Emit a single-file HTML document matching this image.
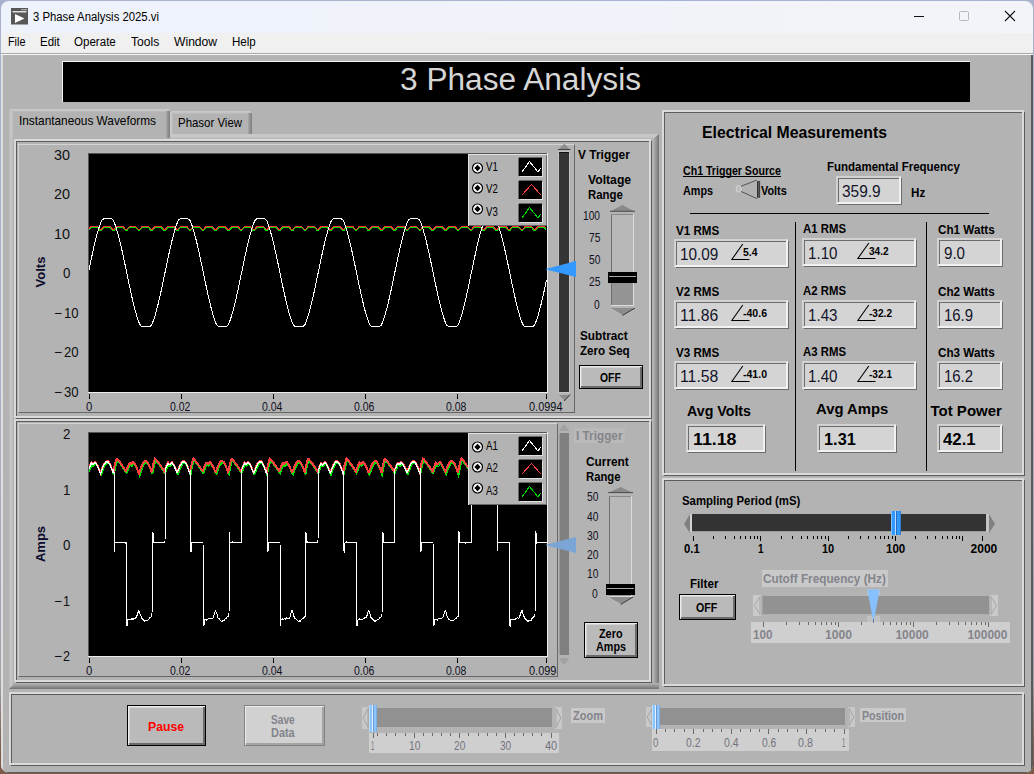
<!DOCTYPE html>
<html><head><meta charset="utf-8"><title>3 Phase Analysis 2025.vi</title>
<style>
html,body{margin:0;padding:0;}
body{width:1034px;height:774px;overflow:hidden;position:relative;background:linear-gradient(180deg,#a9b1d0 0,#aab0c8 50%,#a0a0a8 88%,#7a5c48 97%);font-family:"Liberation Sans",sans-serif;}
#root{position:absolute;left:0;top:0;width:1034px;height:774px;overflow:hidden;}
#root div,#root span.t,#root svg{position:absolute;box-sizing:content-box;}
span.t{white-space:nowrap;transform-origin:0 0;display:block;}
</style></head><body><div id="root">
<div id="win" style="left:1px;top:1px;width:1032px;height:772px;border-radius:8px;overflow:hidden;background:#b3b3b3">
<div style="left:-1px;top:-1px;width:1034px;height:774px">
<div style="left:1px;top:1px;width:1032px;height:32px;background:linear-gradient(90deg,#eef2fb,#f3f4f9);"></div>
<div style="left:1px;top:33px;width:1032px;height:20px;background:#f0f0f0;"></div>
<div style="left:1px;top:53px;width:1032px;height:1px;background:#a9a9a9;"></div>
<div style="left:1px;top:54px;width:1032px;height:1px;background:#fafafa;"></div>
<div style="left:1px;top:55px;width:2px;height:718px;background:#dedede;"></div>
<div style="left:1031px;top:55px;width:2px;height:718px;background:#5a5a5a;"></div>
<div style="left:1px;top:772px;width:1032px;height:1px;background:#5a5a5a;"></div>
<svg style="left:11px;top:8px" width="17" height="17" viewBox="0 0 17 17"><rect x="0" y="0" width="17" height="16.5" fill="#575757"/><rect x="1.5" y="3.2" width="14" height="1.2" fill="#fff"/><rect x="10.5" y="1.2" width="1.2" height="1" fill="#fff"/><rect x="12.5" y="1.2" width="1.2" height="1" fill="#fff"/><rect x="14.5" y="1.2" width="1.2" height="1" fill="#fff"/><path d="M4 6 L13.5 10.5 L4 15 Z" fill="#fff"/></svg>
<span class="t " style="left:33.40px;top:10.92px;font-size:12px;line-height:12px;color:#000;transform:scaleX(0.9444);">3 Phase Analysis 2025.vi</span>
<svg style="left:900px;top:1px" width="132" height="32" viewBox="0 0 132 32"><path d="M14 15.5 H24" stroke="#111" stroke-width="1" fill="none"/><rect x="59.5" y="10.5" width="9" height="9" rx="1" fill="none" stroke="#b9b9bd" stroke-width="1"/><path d="M105 10 L115 20 M115 10 L105 20" stroke="#111" stroke-width="1.1" fill="none"/></svg>
<span class="t " style="left:8.00px;top:36.22px;font-size:12px;line-height:12px;color:#000;transform:scaleX(0.8999);">File</span>
<span class="t " style="left:40.20px;top:36.22px;font-size:12px;line-height:12px;color:#000;transform:scaleX(0.9576);">Edit</span>
<span class="t " style="left:74.40px;top:36.22px;font-size:12px;line-height:12px;color:#000;transform:scaleX(0.9641);">Operate</span>
<span class="t " style="left:130.50px;top:36.22px;font-size:12px;line-height:12px;color:#000;transform:scaleX(1.0067);">Tools</span>
<span class="t " style="left:173.60px;top:36.22px;font-size:12px;line-height:12px;color:#000;transform:scaleX(1.0099);">Window</span>
<span class="t " style="left:231.60px;top:36.22px;font-size:12px;line-height:12px;color:#000;transform:scaleX(0.9644);">Help</span>
<div style="left:62px;top:61px;width:908px;height:41px;background:#f4f4f4;"></div>
<div style="left:63px;top:62px;width:907px;height:40px;background:#000;"></div>
<span class="t " style="left:399.50px;top:64.36px;font-size:31px;line-height:31px;color:#d6d6d6;transform:scaleX(1.0208);">3 Phase Analysis</span>
<div style="left:9px;top:134px;width:650px;height:555px;background:#b3b3b3"></div>
<div style="left:9px;top:134px;width:4px;height:555px;background:linear-gradient(90deg,#b9b9b9,#c8c8c8 50%,#bcbcbc);"></div>
<div style="left:170px;top:134px;width:489px;height:5px;background:linear-gradient(180deg,#c4c4c4,#cacaca 40%,#b8b8b8);"></div>
<div style="left:653px;top:134px;width:6px;height:555px;background:linear-gradient(90deg,#b6b6b6,#747474);clip-path:polygon(0 5px,100% 0,100% 100%,0 100%);"></div>
<div style="left:9px;top:683px;width:650px;height:6px;background:linear-gradient(180deg,#b6b6b6,#747474);clip-path:polygon(6px 0,100% 0,100% 100%,0 100%);"></div>
<div style="left:170px;top:111px;width:82px;height:23px;background:#b3b3b3;"></div>
<div style="left:170px;top:111px;width:82px;height:3px;background:linear-gradient(180deg,#cfcfcf,#b8b8b8);border-radius:3px 3px 0 0;"></div>
<div style="left:170px;top:112px;width:3px;height:22px;background:linear-gradient(90deg,#cfcfcf,#b8b8b8);"></div>
<div style="left:248px;top:113px;width:4px;height:21px;background:linear-gradient(90deg,#a8a8a8,#7c7c7c);"></div>
<span class="t " style="left:178.20px;top:115.58px;font-size:13px;line-height:13px;color:#000;transform:scaleX(0.8798);">Phasor View</span>
<div style="left:9px;top:109px;width:161px;height:30px;background:#b3b3b3;"></div>
<div style="left:9px;top:109px;width:161px;height:3px;background:linear-gradient(180deg,#cfcfcf,#b8b8b8);border-radius:3px 3px 0 0;"></div>
<div style="left:9px;top:110px;width:4px;height:30px;background:linear-gradient(90deg,#b9b9b9,#c8c8c8 50%,#bcbcbc);"></div>
<div style="left:166px;top:111px;width:4px;height:27px;background:linear-gradient(90deg,#a8a8a8,#7c7c7c);"></div>
<span class="t " style="left:19.40px;top:113.88px;font-size:13px;line-height:13px;color:#000;transform:scaleX(0.9101);">Instantaneous Waveforms</span>
<div style="left:16px;top:141px;width:634px;height:276px;border:1px solid #5c5c5c"></div>
<div style="left:14px;top:139px;width:633px;height:275px;border:2px solid #dadada"></div>
<div style="left:16px;top:421px;width:634px;height:260px;border:1px solid #5c5c5c"></div>
<div style="left:14px;top:419px;width:633px;height:259px;border:2px solid #dadada"></div>
<div style="left:664px;top:112px;width:359px;height:362px;border:1px solid #5c5c5c"></div>
<div style="left:662px;top:110px;width:358px;height:361px;border:2px solid #dadada"></div>
<div style="left:664px;top:480px;width:359px;height:205px;border:1px solid #5c5c5c"></div>
<div style="left:662px;top:478px;width:358px;height:204px;border:2px solid #dadada"></div>
<div style="left:11px;top:694px;width:1012px;height:70px;border:1px solid #5c5c5c"></div>
<div style="left:9px;top:692px;width:1011px;height:69px;border:2px solid #dadada"></div>
<div style="left:18px;top:144px;width:555px;height:267px;border:1px solid #d4d4d4;border-right-color:#666;border-bottom-color:#666"></div>
<div style="left:88px;top:153px;width:460px;height:240px;background:#ececec;"></div>
<div style="left:88px;top:153px;width:1px;height:239px;background:#555;"></div>
<div style="left:88px;top:153px;width:459px;height:1px;background:#555;"></div>
<div style="left:89px;top:154px;width:458px;height:238px;background:#000;"></div>
<span class="t " style="left:53.90px;top:147.74px;font-size:14px;line-height:14px;color:#111;transform:scaleX(1.0276);">30</span>
<span class="t " style="left:53.90px;top:187.24px;font-size:14px;line-height:14px;color:#111;transform:scaleX(1.0276);">20</span>
<span class="t " style="left:53.90px;top:226.74px;font-size:14px;line-height:14px;color:#111;transform:scaleX(1.0276);">10</span>
<span class="t " style="left:62.50px;top:266.24px;font-size:14px;line-height:14px;color:#111;transform:scaleX(0.9505);">0</span>
<span class="t " style="left:54.00px;top:305.74px;font-size:14px;line-height:14px;color:#111;transform:scaleX(0.9784);">−</span>
<span class="t " style="left:63.60px;top:305.74px;font-size:14px;line-height:14px;color:#111;transform:scaleX(0.9377);">10</span>
<span class="t " style="left:54.00px;top:345.24px;font-size:14px;line-height:14px;color:#111;transform:scaleX(0.9784);">−</span>
<span class="t " style="left:63.60px;top:345.24px;font-size:14px;line-height:14px;color:#111;transform:scaleX(0.9377);">20</span>
<span class="t " style="left:54.00px;top:384.74px;font-size:14px;line-height:14px;color:#111;transform:scaleX(0.9784);">−</span>
<span class="t " style="left:63.60px;top:384.74px;font-size:14px;line-height:14px;color:#111;transform:scaleX(0.9377);">30</span>
<div style="left:89px;top:394px;width:1px;height:5px;background:#000;"></div>
<span class="t " style="left:86.15px;top:400.52px;font-size:12px;line-height:12px;color:#101020;transform:scaleX(0.9441);">0</span>
<div style="left:181px;top:394px;width:1px;height:5px;background:#000;"></div>
<span class="t " style="left:170.40px;top:400.52px;font-size:12px;line-height:12px;color:#101020;transform:scaleX(0.8735);">0.02</span>
<div style="left:273px;top:394px;width:1px;height:5px;background:#000;"></div>
<span class="t " style="left:262.40px;top:400.52px;font-size:12px;line-height:12px;color:#101020;transform:scaleX(0.8735);">0.04</span>
<div style="left:365px;top:394px;width:1px;height:5px;background:#000;"></div>
<span class="t " style="left:354.40px;top:400.52px;font-size:12px;line-height:12px;color:#101020;transform:scaleX(0.8735);">0.06</span>
<div style="left:457px;top:394px;width:1px;height:5px;background:#000;"></div>
<span class="t " style="left:446.40px;top:400.52px;font-size:12px;line-height:12px;color:#101020;transform:scaleX(0.8735);">0.08</span>
<div style="left:546px;top:394px;width:1px;height:5px;background:#000;"></div>
<span class="t " style="left:529.00px;top:400.52px;font-size:12px;line-height:12px;color:#101020;transform:scaleX(0.9128);">0.0994</span>
<span class="t" style="left:39.6px;top:272px;font-size:13px;line-height:13px;font-weight:bold;color:#0a0a2a;transform:translate(-50%,-50%) rotate(-90deg);transform-origin:50% 50%;">Volts</span>
<svg style="left:89px;top:153px" width="458" height="239" viewBox="0 0 458 239"><polyline points="0.0,77.1 1.0,75.9 2.0,74.8 3.0,74.4 4.0,74.4 5.0,74.4 6.0,74.4 7.0,74.4 8.0,74.4 9.0,75.2 10.0,76.3 11.0,77.5 12.0,78.0 13.0,76.8 14.0,75.7 15.0,74.5 16.0,74.4 17.0,74.4 18.0,74.4 19.0,74.4 20.0,74.4 21.0,74.4 22.0,75.5 23.0,76.6 24.0,77.8 25.0,77.7 26.0,76.5 27.0,75.4 28.0,74.4 29.0,74.4 30.0,74.4 31.0,74.4 32.0,74.4 33.0,74.4 34.0,74.6 35.0,75.7 36.0,76.9 37.0,78.0 38.0,77.4 39.0,76.3 40.0,75.1 41.0,74.4 42.0,74.4 43.0,74.4 44.0,74.4 45.0,74.4 46.0,74.4 47.0,74.9 48.0,76.0 49.0,77.2 50.0,78.3 51.0,77.2 52.0,76.0 53.0,74.9 54.0,74.4 55.0,74.4 56.0,74.4 57.0,74.4 58.0,74.4 59.0,74.4 60.0,75.1 61.0,76.3 62.0,77.4 63.0,78.0 64.0,76.9 65.0,75.7 66.0,74.6 67.0,74.4 68.0,74.4 69.0,74.4 70.0,74.4 71.0,74.4 72.0,74.4 73.0,75.4 74.0,76.5 75.0,77.7 76.0,77.8 77.0,76.6 78.0,75.5 79.0,74.4 80.0,74.4 81.0,74.4 82.0,74.4 83.0,74.4 84.0,74.4 85.0,74.5 86.0,75.7 87.0,76.8 88.0,78.0 89.0,77.5 90.0,76.3 91.0,75.2 92.0,74.4 93.0,74.4 94.0,74.4 95.0,74.4 96.0,74.4 97.0,74.4 98.0,74.8 99.0,75.9 100.0,77.1 101.0,78.2 102.0,77.2 103.0,76.1 104.0,74.9 105.0,74.4 106.0,74.4 107.0,74.4 108.0,74.4 109.0,74.4 110.0,74.4 111.0,75.0 112.0,76.2 113.0,77.3 114.0,78.1 115.0,77.0 116.0,75.8 117.0,74.7 118.0,74.4 119.0,74.4 120.0,74.4 121.0,74.4 122.0,74.4 123.0,74.4 124.0,75.3 125.0,76.5 126.0,77.6 127.0,77.8 128.0,76.7 129.0,75.5 130.0,74.4 131.0,74.4 132.0,74.4 133.0,74.4 134.0,74.4 135.0,74.4 136.0,74.4 137.0,75.6 138.0,76.7 139.0,77.9 140.0,77.6 141.0,76.4 142.0,75.3 143.0,74.4 144.0,74.4 145.0,74.4 146.0,74.4 147.0,74.4 148.0,74.4 149.0,74.7 150.0,75.8 151.0,77.0 152.0,78.1 153.0,77.3 154.0,76.2 155.0,75.0 156.0,74.4 157.0,74.4 158.0,74.4 159.0,74.4 160.0,74.4 161.0,74.4 162.0,75.0 163.0,76.1 164.0,77.3 165.0,78.2 166.0,77.0 167.0,75.9 168.0,74.7 169.0,74.4 170.0,74.4 171.0,74.4 172.0,74.4 173.0,74.4 174.0,74.4 175.0,75.2 176.0,76.4 177.0,77.5 178.0,77.9 179.0,76.8 180.0,75.6 181.0,74.5 182.0,74.4 183.0,74.4 184.0,74.4 185.0,74.4 186.0,74.4 187.0,74.4 188.0,75.5 189.0,76.7 190.0,77.8 191.0,77.6 192.0,76.5 193.0,75.3 194.0,74.4 195.0,74.4 196.0,74.4 197.0,74.4 198.0,74.4 199.0,74.4 200.0,74.6 201.0,75.8 202.0,76.9 203.0,78.1 204.0,77.4 205.0,76.2 206.0,75.1 207.0,74.4 208.0,74.4 209.0,74.4 210.0,74.4 211.0,74.4 212.0,74.4 213.0,74.9 214.0,76.0 215.0,77.2 216.0,78.3 217.0,77.1 218.0,76.0 219.0,74.8 220.0,74.4 221.0,74.4 222.0,74.4 223.0,74.4 224.0,74.4 225.0,74.4 226.0,75.2 227.0,76.3 228.0,77.5 229.0,78.0 230.0,76.8 231.0,75.7 232.0,74.5 233.0,74.4 234.0,74.4 235.0,74.4 236.0,74.4 237.0,74.4 238.0,74.4 239.0,75.4 240.0,76.6 241.0,77.7 242.0,77.7 243.0,76.6 244.0,75.4 245.0,74.4 246.0,74.4 247.0,74.4 248.0,74.4 249.0,74.4 250.0,74.4 251.0,74.5 252.0,75.7 253.0,76.8 254.0,78.0 255.0,77.5 256.0,76.3 257.0,75.2 258.0,74.4 259.0,74.4 260.0,74.4 261.0,74.4 262.0,74.4 263.0,74.4 264.0,74.8 265.0,76.0 266.0,77.1 267.0,78.3 268.0,77.2 269.0,76.0 270.0,74.9 271.0,74.4 272.0,74.4 273.0,74.4 274.0,74.4 275.0,74.4 276.0,74.4 277.0,75.1 278.0,76.2 279.0,77.4 280.0,78.1 281.0,76.9 282.0,75.8 283.0,74.6 284.0,74.4 285.0,74.4 286.0,74.4 287.0,74.4 288.0,74.4 289.0,74.4 290.0,75.3 291.0,76.5 292.0,77.6 293.0,77.8 294.0,76.7 295.0,75.5 296.0,74.4 297.0,74.4 298.0,74.4 299.0,74.4 300.0,74.4 301.0,74.4 302.0,74.5 303.0,75.6 304.0,76.8 305.0,77.9 306.0,77.5 307.0,76.4 308.0,75.2 309.0,74.4 310.0,74.4 311.0,74.4 312.0,74.4 313.0,74.4 314.0,74.4 315.0,74.7 316.0,75.9 317.0,77.0 318.0,78.2 319.0,77.3 320.0,76.1 321.0,75.0 322.0,74.4 323.0,74.4 324.0,74.4 325.0,74.4 326.0,74.4 327.0,74.4 328.0,75.0 329.0,76.2 330.0,77.3 331.0,78.1 332.0,77.0 333.0,75.8 334.0,74.7 335.0,74.4 336.0,74.4 337.0,74.4 338.0,74.4 339.0,74.4 340.0,74.4 341.0,75.3 342.0,76.4 343.0,77.6 344.0,77.9 345.0,76.7 346.0,75.6 347.0,74.4 348.0,74.4 349.0,74.4 350.0,74.4 351.0,74.4 352.0,74.4 353.0,74.4 354.0,75.5 355.0,76.7 356.0,77.8 357.0,77.6 358.0,76.5 359.0,75.3 360.0,74.4 361.0,74.4 362.0,74.4 363.0,74.4 364.0,74.4 365.0,74.4 366.0,74.7 367.0,75.8 368.0,77.0 369.0,78.1 370.0,77.3 371.0,76.2 372.0,75.0 373.0,74.4 374.0,74.4 375.0,74.4 376.0,74.4 377.0,74.4 378.0,74.4 379.0,74.9 380.0,76.1 381.0,77.2 382.0,78.2 383.0,77.1 384.0,75.9 385.0,74.8 386.0,74.4 387.0,74.4 388.0,74.4 389.0,74.4 390.0,74.4 391.0,74.4 392.0,75.2 393.0,76.3 394.0,77.5 395.0,78.0 396.0,76.8 397.0,75.7 398.0,74.5 399.0,74.4 400.0,74.4 401.0,74.4 402.0,74.4 403.0,74.4 404.0,74.4 405.0,75.5 406.0,76.6 407.0,77.8 408.0,77.7 409.0,76.5 410.0,75.4 411.0,74.4 412.0,74.4 413.0,74.4 414.0,74.4 415.0,74.4 416.0,74.4 417.0,74.6 418.0,75.7 419.0,76.9 420.0,78.0 421.0,77.4 422.0,76.3 423.0,75.1 424.0,74.4 425.0,74.4 426.0,74.4 427.0,74.4 428.0,74.4 429.0,74.4 430.0,74.9 431.0,76.0 432.0,77.2 433.0,78.3 434.0,77.1 435.0,76.0 436.0,74.8 437.0,74.4 438.0,74.4 439.0,74.4 440.0,74.4 441.0,74.4 442.0,74.4 443.0,75.1 444.0,76.3 445.0,77.4 446.0,78.0 447.0,76.9 448.0,75.7 449.0,74.6 450.0,74.4 451.0,74.4 452.0,74.4 453.0,74.4 454.0,74.4 455.0,74.4 456.0,75.4 457.0,76.5" fill="none" stroke="#00e000" stroke-width="1" shape-rendering="crispEdges"/><polyline points="0.0,75.9 1.0,74.7 2.0,73.6 3.0,73.2 4.0,73.2 5.0,73.2 6.0,73.2 7.0,73.2 8.0,73.2 9.0,74.0 10.0,75.1 11.0,76.3 12.0,76.8 13.0,75.6 14.0,74.5 15.0,73.3 16.0,73.2 17.0,73.2 18.0,73.2 19.0,73.2 20.0,73.2 21.0,73.2 22.0,74.3 23.0,75.4 24.0,76.6 25.0,76.5 26.0,75.3 27.0,74.2 28.0,73.2 29.0,73.2 30.0,73.2 31.0,73.2 32.0,73.2 33.0,73.2 34.0,73.4 35.0,74.5 36.0,75.7 37.0,76.8 38.0,76.2 39.0,75.1 40.0,73.9 41.0,73.2 42.0,73.2 43.0,73.2 44.0,73.2 45.0,73.2 46.0,73.2 47.0,73.7 48.0,74.8 49.0,76.0 50.0,77.1 51.0,76.0 52.0,74.8 53.0,73.7 54.0,73.2 55.0,73.2 56.0,73.2 57.0,73.2 58.0,73.2 59.0,73.2 60.0,73.9 61.0,75.1 62.0,76.2 63.0,76.8 64.0,75.7 65.0,74.5 66.0,73.4 67.0,73.2 68.0,73.2 69.0,73.2 70.0,73.2 71.0,73.2 72.0,73.2 73.0,74.2 74.0,75.3 75.0,76.5 76.0,76.6 77.0,75.4 78.0,74.3 79.0,73.2 80.0,73.2 81.0,73.2 82.0,73.2 83.0,73.2 84.0,73.2 85.0,73.3 86.0,74.5 87.0,75.6 88.0,76.8 89.0,76.3 90.0,75.1 91.0,74.0 92.0,73.2 93.0,73.2 94.0,73.2 95.0,73.2 96.0,73.2 97.0,73.2 98.0,73.6 99.0,74.7 100.0,75.9 101.0,77.0 102.0,76.0 103.0,74.9 104.0,73.7 105.0,73.2 106.0,73.2 107.0,73.2 108.0,73.2 109.0,73.2 110.0,73.2 111.0,73.8 112.0,75.0 113.0,76.1 114.0,76.9 115.0,75.8 116.0,74.6 117.0,73.5 118.0,73.2 119.0,73.2 120.0,73.2 121.0,73.2 122.0,73.2 123.0,73.2 124.0,74.1 125.0,75.3 126.0,76.4 127.0,76.6 128.0,75.5 129.0,74.3 130.0,73.2 131.0,73.2 132.0,73.2 133.0,73.2 134.0,73.2 135.0,73.2 136.0,73.2 137.0,74.4 138.0,75.5 139.0,76.7 140.0,76.4 141.0,75.2 142.0,74.1 143.0,73.2 144.0,73.2 145.0,73.2 146.0,73.2 147.0,73.2 148.0,73.2 149.0,73.5 150.0,74.6 151.0,75.8 152.0,76.9 153.0,76.1 154.0,75.0 155.0,73.8 156.0,73.2 157.0,73.2 158.0,73.2 159.0,73.2 160.0,73.2 161.0,73.2 162.0,73.8 163.0,74.9 164.0,76.1 165.0,77.0 166.0,75.8 167.0,74.7 168.0,73.5 169.0,73.2 170.0,73.2 171.0,73.2 172.0,73.2 173.0,73.2 174.0,73.2 175.0,74.0 176.0,75.2 177.0,76.3 178.0,76.7 179.0,75.6 180.0,74.4 181.0,73.3 182.0,73.2 183.0,73.2 184.0,73.2 185.0,73.2 186.0,73.2 187.0,73.2 188.0,74.3 189.0,75.5 190.0,76.6 191.0,76.4 192.0,75.3 193.0,74.1 194.0,73.2 195.0,73.2 196.0,73.2 197.0,73.2 198.0,73.2 199.0,73.2 200.0,73.4 201.0,74.6 202.0,75.7 203.0,76.9 204.0,76.2 205.0,75.0 206.0,73.9 207.0,73.2 208.0,73.2 209.0,73.2 210.0,73.2 211.0,73.2 212.0,73.2 213.0,73.7 214.0,74.8 215.0,76.0 216.0,77.1 217.0,75.9 218.0,74.8 219.0,73.6 220.0,73.2 221.0,73.2 222.0,73.2 223.0,73.2 224.0,73.2 225.0,73.2 226.0,74.0 227.0,75.1 228.0,76.3 229.0,76.8 230.0,75.6 231.0,74.5 232.0,73.3 233.0,73.2 234.0,73.2 235.0,73.2 236.0,73.2 237.0,73.2 238.0,73.2 239.0,74.2 240.0,75.4 241.0,76.5 242.0,76.5 243.0,75.4 244.0,74.2 245.0,73.2 246.0,73.2 247.0,73.2 248.0,73.2 249.0,73.2 250.0,73.2 251.0,73.3 252.0,74.5 253.0,75.6 254.0,76.8 255.0,76.3 256.0,75.1 257.0,74.0 258.0,73.2 259.0,73.2 260.0,73.2 261.0,73.2 262.0,73.2 263.0,73.2 264.0,73.6 265.0,74.8 266.0,75.9 267.0,77.1 268.0,76.0 269.0,74.8 270.0,73.7 271.0,73.2 272.0,73.2 273.0,73.2 274.0,73.2 275.0,73.2 276.0,73.2 277.0,73.9 278.0,75.0 279.0,76.2 280.0,76.9 281.0,75.7 282.0,74.6 283.0,73.4 284.0,73.2 285.0,73.2 286.0,73.2 287.0,73.2 288.0,73.2 289.0,73.2 290.0,74.1 291.0,75.3 292.0,76.4 293.0,76.6 294.0,75.5 295.0,74.3 296.0,73.2 297.0,73.2 298.0,73.2 299.0,73.2 300.0,73.2 301.0,73.2 302.0,73.3 303.0,74.4 304.0,75.6 305.0,76.7 306.0,76.3 307.0,75.2 308.0,74.0 309.0,73.2 310.0,73.2 311.0,73.2 312.0,73.2 313.0,73.2 314.0,73.2 315.0,73.5 316.0,74.7 317.0,75.8 318.0,77.0 319.0,76.1 320.0,74.9 321.0,73.8 322.0,73.2 323.0,73.2 324.0,73.2 325.0,73.2 326.0,73.2 327.0,73.2 328.0,73.8 329.0,75.0 330.0,76.1 331.0,76.9 332.0,75.8 333.0,74.6 334.0,73.5 335.0,73.2 336.0,73.2 337.0,73.2 338.0,73.2 339.0,73.2 340.0,73.2 341.0,74.1 342.0,75.2 343.0,76.4 344.0,76.7 345.0,75.5 346.0,74.4 347.0,73.2 348.0,73.2 349.0,73.2 350.0,73.2 351.0,73.2 352.0,73.2 353.0,73.2 354.0,74.3 355.0,75.5 356.0,76.6 357.0,76.4 358.0,75.3 359.0,74.1 360.0,73.2 361.0,73.2 362.0,73.2 363.0,73.2 364.0,73.2 365.0,73.2 366.0,73.5 367.0,74.6 368.0,75.8 369.0,76.9 370.0,76.1 371.0,75.0 372.0,73.8 373.0,73.2 374.0,73.2 375.0,73.2 376.0,73.2 377.0,73.2 378.0,73.2 379.0,73.7 380.0,74.9 381.0,76.0 382.0,77.0 383.0,75.9 384.0,74.7 385.0,73.6 386.0,73.2 387.0,73.2 388.0,73.2 389.0,73.2 390.0,73.2 391.0,73.2 392.0,74.0 393.0,75.1 394.0,76.3 395.0,76.8 396.0,75.6 397.0,74.5 398.0,73.3 399.0,73.2 400.0,73.2 401.0,73.2 402.0,73.2 403.0,73.2 404.0,73.2 405.0,74.3 406.0,75.4 407.0,76.6 408.0,76.5 409.0,75.3 410.0,74.2 411.0,73.2 412.0,73.2 413.0,73.2 414.0,73.2 415.0,73.2 416.0,73.2 417.0,73.4 418.0,74.5 419.0,75.7 420.0,76.8 421.0,76.2 422.0,75.1 423.0,73.9 424.0,73.2 425.0,73.2 426.0,73.2 427.0,73.2 428.0,73.2 429.0,73.2 430.0,73.7 431.0,74.8 432.0,76.0 433.0,77.1 434.0,75.9 435.0,74.8 436.0,73.6 437.0,73.2 438.0,73.2 439.0,73.2 440.0,73.2 441.0,73.2 442.0,73.2 443.0,73.9 444.0,75.1 445.0,76.2 446.0,76.8 447.0,75.7 448.0,74.5 449.0,73.4 450.0,73.2 451.0,73.2 452.0,73.2 453.0,73.2 454.0,73.2 455.0,73.2 456.0,74.2 457.0,75.3" fill="none" stroke="#ff3030" stroke-width="1" shape-rendering="crispEdges"/><polyline points="0.0,116.7 0.5,114.3 1.0,111.9 1.5,109.5 2.0,107.1 2.5,104.8 3.0,102.5 3.5,100.2 4.0,97.9 4.5,95.7 5.0,93.5 5.5,91.4 6.0,89.3 6.5,87.2 7.0,85.2 7.5,83.3 8.0,81.4 8.5,79.6 9.0,77.9 9.5,76.2 10.0,74.6 10.5,73.1 11.0,71.7 11.5,70.3 12.0,69.0 12.5,67.9 13.0,67.1 13.5,66.5 14.0,66.2 14.5,66.0 15.0,65.8 15.5,65.7 16.0,65.7 16.5,65.6 17.0,65.6 17.5,65.6 18.0,65.6 18.5,65.6 19.0,65.6 19.5,65.6 20.0,65.6 20.5,65.6 21.0,65.7 21.5,65.7 22.0,65.8 22.5,65.9 23.0,66.1 23.5,66.4 24.0,67.0 24.5,67.7 25.0,68.8 25.5,70.1 26.0,71.4 26.5,72.8 27.0,74.3 27.5,75.9 28.0,77.6 28.5,79.3 29.0,81.1 29.5,82.9 30.0,84.8 30.5,86.8 31.0,88.9 31.5,90.9 32.0,93.1 32.5,95.3 33.0,97.5 33.5,99.7 34.0,102.0 34.5,104.3 35.0,106.7 35.5,109.0 36.0,111.4 36.5,113.8 37.0,116.2 37.5,118.6 38.0,121.0 38.5,123.5 39.0,125.9 39.5,128.3 40.0,130.6 40.5,133.0 41.0,135.3 41.5,137.6 42.0,139.9 42.5,142.2 43.0,144.4 43.5,146.6 44.0,148.7 44.5,150.8 45.0,152.8 45.5,154.7 46.0,156.6 46.5,158.5 47.0,160.3 47.5,162.0 48.0,163.6 48.5,165.2 49.0,166.7 49.5,168.1 50.0,169.4 50.5,170.6 51.0,171.6 51.5,172.4 52.0,172.8 52.5,173.1 53.0,173.3 53.5,173.4 54.0,173.5 54.5,173.6 55.0,173.6 55.5,173.6 56.0,173.6 56.5,173.6 57.0,173.6 57.5,173.6 58.0,173.6 58.5,173.6 59.0,173.6 59.5,173.5 60.0,173.5 60.5,173.4 61.0,173.2 61.5,173.0 62.0,172.6 62.5,172.0 63.0,171.1 63.5,169.9 64.0,168.6 64.5,167.2 65.0,165.8 65.5,164.3 66.0,162.6 66.5,161.0 67.0,159.2 67.5,157.4 68.0,155.5 68.5,153.6 69.0,151.6 69.5,149.5 70.0,147.4 70.5,145.3 71.0,143.1 71.5,140.8 72.0,138.6 72.5,136.3 73.0,133.9 73.5,131.6 74.0,129.2 74.5,126.8 75.0,124.4 75.5,122.0 76.0,119.6 76.5,117.2 77.0,114.8 77.5,112.4 78.0,110.0 78.5,107.6 79.0,105.3 79.5,102.9 80.0,100.6 80.5,98.4 81.0,96.1 81.5,93.9 82.0,91.8 82.5,89.7 83.0,87.6 83.5,85.6 84.0,83.7 84.5,81.8 85.0,80.0 85.5,78.2 86.0,76.6 86.5,74.9 87.0,73.4 87.5,72.0 88.0,70.6 88.5,69.3 89.0,68.1 89.5,67.2 90.0,66.6 90.5,66.2 91.0,66.0 91.5,65.8 92.0,65.7 92.5,65.7 93.0,65.6 93.5,65.6 94.0,65.6 94.5,65.6 95.0,65.6 95.5,65.6 96.0,65.6 96.5,65.6 97.0,65.6 97.5,65.6 98.0,65.7 98.5,65.8 99.0,65.9 99.5,66.1 100.0,66.4 100.5,66.8 101.0,67.6 101.5,68.6 102.0,69.8 102.5,71.1 103.0,72.5 103.5,74.0 104.0,75.6 104.5,77.2 105.0,78.9 105.5,80.7 106.0,82.6 106.5,84.5 107.0,86.4 107.5,88.4 108.0,90.5 108.5,92.6 109.0,94.8 109.5,97.0 110.0,99.3 110.5,101.6 111.0,103.9 111.5,106.2 112.0,108.6 112.5,110.9 113.0,113.3 113.5,115.7 114.0,118.2 114.5,120.6 115.0,123.0 115.5,125.4 116.0,127.8 116.5,130.2 117.0,132.5 117.5,134.9 118.0,137.2 118.5,139.5 119.0,141.7 119.5,143.9 120.0,146.1 120.5,148.3 121.0,150.3 121.5,152.4 122.0,154.4 122.5,156.3 123.0,158.1 123.5,159.9 124.0,161.6 124.5,163.3 125.0,164.9 125.5,166.4 126.0,167.8 126.5,169.1 127.0,170.4 127.5,171.5 128.0,172.2 128.5,172.8 129.0,173.1 129.5,173.3 130.0,173.4 130.5,173.5 131.0,173.5 131.5,173.6 132.0,173.6 132.5,173.6 133.0,173.6 133.5,173.6 134.0,173.6 134.5,173.6 135.0,173.6 135.5,173.6 136.0,173.5 136.5,173.5 137.0,173.4 137.5,173.2 138.0,173.0 138.5,172.7 139.0,172.1 139.5,171.3 140.0,170.2 140.5,168.9 141.0,167.5 141.5,166.1 142.0,164.6 142.5,163.0 143.0,161.3 143.5,159.6 144.0,157.8 144.5,155.9 145.0,154.0 145.5,152.0 146.0,149.9 146.5,147.8 147.0,145.7 147.5,143.5 148.0,141.3 148.5,139.0 149.0,136.7 149.5,134.4 150.0,132.1 150.5,129.7 151.0,127.3 151.5,124.9 152.0,122.5 152.5,120.1 153.0,117.7 153.5,115.3 154.0,112.9 154.5,110.5 155.0,108.1 155.5,105.7 156.0,103.4 156.5,101.1 157.0,98.8 157.5,96.6 158.0,94.4 158.5,92.2 159.0,90.1 159.5,88.0 160.0,86.0 160.5,84.1 161.0,82.2 161.5,80.4 162.0,78.6 162.5,76.9 163.0,75.3 163.5,73.7 164.0,72.2 164.5,70.8 165.0,69.5 165.5,68.3 166.0,67.4 166.5,66.7 167.0,66.3 167.5,66.0 168.0,65.9 168.5,65.8 169.0,65.7 169.5,65.6 170.0,65.6 170.5,65.6 171.0,65.6 171.5,65.6 172.0,65.6 172.5,65.6 173.0,65.6 173.5,65.6 174.0,65.6 174.5,65.7 175.0,65.8 175.5,65.9 176.0,66.0 176.5,66.3 177.0,66.7 177.5,67.4 178.0,68.3 178.5,69.5 179.0,70.8 179.5,72.2 180.0,73.7 180.5,75.3 181.0,76.9 181.5,78.6 182.0,80.4 182.5,82.2 183.0,84.1 183.5,86.0 184.0,88.0 184.5,90.1 185.0,92.2 185.5,94.4 186.0,96.6 186.5,98.8 187.0,101.1 187.5,103.4 188.0,105.7 188.5,108.1 189.0,110.5 189.5,112.9 190.0,115.3 190.5,117.7 191.0,120.1 191.5,122.5 192.0,124.9 192.5,127.3 193.0,129.7 193.5,132.1 194.0,134.4 194.5,136.7 195.0,139.0 195.5,141.3 196.0,143.5 196.5,145.7 197.0,147.8 197.5,149.9 198.0,152.0 198.5,154.0 199.0,155.9 199.5,157.8 200.0,159.6 200.5,161.3 201.0,163.0 201.5,164.6 202.0,166.1 202.5,167.5 203.0,168.9 203.5,170.2 204.0,171.3 204.5,172.1 205.0,172.7 205.5,173.0 206.0,173.2 206.5,173.4 207.0,173.5 207.5,173.5 208.0,173.6 208.5,173.6 209.0,173.6 209.5,173.6 210.0,173.6 210.5,173.6 211.0,173.6 211.5,173.6 212.0,173.6 212.5,173.5 213.0,173.5 213.5,173.4 214.0,173.3 214.5,173.1 215.0,172.8 215.5,172.2 216.0,171.5 216.5,170.4 217.0,169.1 217.5,167.8 218.0,166.4 218.5,164.9 219.0,163.3 219.5,161.6 220.0,159.9 220.5,158.1 221.0,156.3 221.5,154.4 222.0,152.4 222.5,150.3 223.0,148.3 223.5,146.1 224.0,143.9 224.5,141.7 225.0,139.5 225.5,137.2 226.0,134.9 226.5,132.5 227.0,130.2 227.5,127.8 228.0,125.4 228.5,123.0 229.0,120.6 229.5,118.2 230.0,115.7 230.5,113.3 231.0,110.9 231.5,108.6 232.0,106.2 232.5,103.9 233.0,101.6 233.5,99.3 234.0,97.0 234.5,94.8 235.0,92.6 235.5,90.5 236.0,88.4 236.5,86.4 237.0,84.5 237.5,82.6 238.0,80.7 238.5,78.9 239.0,77.2 239.5,75.6 240.0,74.0 240.5,72.5 241.0,71.1 241.5,69.8 242.0,68.6 242.5,67.6 243.0,66.8 243.5,66.4 244.0,66.1 244.5,65.9 245.0,65.8 245.5,65.7 246.0,65.6 246.5,65.6 247.0,65.6 247.5,65.6 248.0,65.6 248.5,65.6 249.0,65.6 249.5,65.6 250.0,65.6 250.5,65.6 251.0,65.7 251.5,65.7 252.0,65.8 252.5,66.0 253.0,66.2 253.5,66.6 254.0,67.2 254.5,68.1 255.0,69.3 255.5,70.6 256.0,72.0 256.5,73.4 257.0,74.9 257.5,76.6 258.0,78.2 258.5,80.0 259.0,81.8 259.5,83.7 260.0,85.6 260.5,87.6 261.0,89.7 261.5,91.8 262.0,93.9 262.5,96.1 263.0,98.4 263.5,100.6 264.0,102.9 264.5,105.3 265.0,107.6 265.5,110.0 266.0,112.4 266.5,114.8 267.0,117.2 267.5,119.6 268.0,122.0 268.5,124.4 269.0,126.8 269.5,129.2 270.0,131.6 270.5,133.9 271.0,136.3 271.5,138.6 272.0,140.8 272.5,143.1 273.0,145.3 273.5,147.4 274.0,149.5 274.5,151.6 275.0,153.6 275.5,155.5 276.0,157.4 276.5,159.2 277.0,161.0 277.5,162.6 278.0,164.3 278.5,165.8 279.0,167.2 279.5,168.6 280.0,169.9 280.5,171.1 281.0,172.0 281.5,172.6 282.0,173.0 282.5,173.2 283.0,173.4 283.5,173.5 284.0,173.5 284.5,173.6 285.0,173.6 285.5,173.6 286.0,173.6 286.5,173.6 287.0,173.6 287.5,173.6 288.0,173.6 288.5,173.6 289.0,173.6 289.5,173.5 290.0,173.4 290.5,173.3 291.0,173.1 291.5,172.8 292.0,172.4 292.5,171.6 293.0,170.6 293.5,169.4 294.0,168.1 294.5,166.7 295.0,165.2 295.5,163.6 296.0,162.0 296.5,160.3 297.0,158.5 297.5,156.6 298.0,154.7 298.5,152.8 299.0,150.8 299.5,148.7 300.0,146.6 300.5,144.4 301.0,142.2 301.5,139.9 302.0,137.6 302.5,135.3 303.0,133.0 303.5,130.6 304.0,128.3 304.5,125.9 305.0,123.5 305.5,121.0 306.0,118.6 306.5,116.2 307.0,113.8 307.5,111.4 308.0,109.0 308.5,106.7 309.0,104.3 309.5,102.0 310.0,99.7 310.5,97.5 311.0,95.3 311.5,93.1 312.0,90.9 312.5,88.9 313.0,86.8 313.5,84.8 314.0,82.9 314.5,81.1 315.0,79.3 315.5,77.6 316.0,75.9 316.5,74.3 317.0,72.8 317.5,71.4 318.0,70.1 318.5,68.8 319.0,67.7 319.5,67.0 320.0,66.4 320.5,66.1 321.0,65.9 321.5,65.8 322.0,65.7 322.5,65.7 323.0,65.6 323.5,65.6 324.0,65.6 324.5,65.6 325.0,65.6 325.5,65.6 326.0,65.6 326.5,65.6 327.0,65.6 327.5,65.7 328.0,65.7 328.5,65.8 329.0,66.0 329.5,66.2 330.0,66.5 330.5,67.1 331.0,67.9 331.5,69.0 332.0,70.3 332.5,71.7 333.0,73.1 333.5,74.6 334.0,76.2 334.5,77.9 335.0,79.6 335.5,81.4 336.0,83.3 336.5,85.2 337.0,87.2 337.5,89.3 338.0,91.4 338.5,93.5 339.0,95.7 339.5,97.9 340.0,100.2 340.5,102.5 341.0,104.8 341.5,107.1 342.0,109.5 342.5,111.9 343.0,114.3 343.5,116.7 344.0,119.1 344.5,121.5 345.0,123.9 345.5,126.3 346.0,128.7 346.5,131.1 347.0,133.5 347.5,135.8 348.0,138.1 348.5,140.4 349.0,142.6 349.5,144.8 350.0,147.0 350.5,149.1 351.0,151.2 351.5,153.2 352.0,155.1 352.5,157.0 353.0,158.8 353.5,160.6 354.0,162.3 354.5,163.9 355.0,165.5 355.5,167.0 356.0,168.4 356.5,169.7 357.0,170.9 357.5,171.8 358.0,172.5 358.5,172.9 359.0,173.2 359.5,173.3 360.0,173.4 360.5,173.5 361.0,173.6 361.5,173.6 362.0,173.6 362.5,173.6 363.0,173.6 363.5,173.6 364.0,173.6 364.5,173.6 365.0,173.6 365.5,173.6 366.0,173.5 366.5,173.4 367.0,173.3 367.5,173.2 368.0,172.9 368.5,172.5 369.0,171.8 369.5,170.9 370.0,169.7 370.5,168.4 371.0,167.0 371.5,165.5 372.0,163.9 372.5,162.3 373.0,160.6 373.5,158.8 374.0,157.0 374.5,155.1 375.0,153.2 375.5,151.2 376.0,149.1 376.5,147.0 377.0,144.8 377.5,142.6 378.0,140.4 378.5,138.1 379.0,135.8 379.5,133.5 380.0,131.1 380.5,128.7 381.0,126.3 381.5,123.9 382.0,121.5 382.5,119.1 383.0,116.7 383.5,114.3 384.0,111.9 384.5,109.5 385.0,107.1 385.5,104.8 386.0,102.5 386.5,100.2 387.0,97.9 387.5,95.7 388.0,93.5 388.5,91.4 389.0,89.3 389.5,87.2 390.0,85.2 390.5,83.3 391.0,81.4 391.5,79.6 392.0,77.9 392.5,76.2 393.0,74.6 393.5,73.1 394.0,71.7 394.5,70.3 395.0,69.0 395.5,67.9 396.0,67.1 396.5,66.5 397.0,66.2 397.5,66.0 398.0,65.8 398.5,65.7 399.0,65.7 399.5,65.6 400.0,65.6 400.5,65.6 401.0,65.6 401.5,65.6 402.0,65.6 402.5,65.6 403.0,65.6 403.5,65.6 404.0,65.7 404.5,65.7 405.0,65.8 405.5,65.9 406.0,66.1 406.5,66.4 407.0,67.0 407.5,67.7 408.0,68.8 408.5,70.1 409.0,71.4 409.5,72.8 410.0,74.3 410.5,75.9 411.0,77.6 411.5,79.3 412.0,81.1 412.5,82.9 413.0,84.8 413.5,86.8 414.0,88.9 414.5,90.9 415.0,93.1 415.5,95.3 416.0,97.5 416.5,99.7 417.0,102.0 417.5,104.3 418.0,106.7 418.5,109.0 419.0,111.4 419.5,113.8 420.0,116.2 420.5,118.6 421.0,121.0 421.5,123.5 422.0,125.9 422.5,128.3 423.0,130.6 423.5,133.0 424.0,135.3 424.5,137.6 425.0,139.9 425.5,142.2 426.0,144.4 426.5,146.6 427.0,148.7 427.5,150.8 428.0,152.8 428.5,154.7 429.0,156.6 429.5,158.5 430.0,160.3 430.5,162.0 431.0,163.6 431.5,165.2 432.0,166.7 432.5,168.1 433.0,169.4 433.5,170.6 434.0,171.6 434.5,172.4 435.0,172.8 435.5,173.1 436.0,173.3 436.5,173.4 437.0,173.5 437.5,173.6 438.0,173.6 438.5,173.6 439.0,173.6 439.5,173.6 440.0,173.6 440.5,173.6 441.0,173.6 441.5,173.6 442.0,173.6 442.5,173.5 443.0,173.5 443.5,173.4 444.0,173.2 444.5,173.0 445.0,172.6 445.5,172.0 446.0,171.1 446.5,169.9 447.0,168.6 447.5,167.2 448.0,165.8 448.5,164.3 449.0,162.6 449.5,161.0 450.0,159.2 450.5,157.4 451.0,155.5 451.5,153.6 452.0,151.6 452.5,149.5 453.0,147.4 453.5,145.3 454.0,143.1 454.5,140.8 455.0,138.6 455.5,136.3 456.0,133.9 456.5,131.6 457.0,129.2 457.5,126.8" fill="none" stroke="#fff" stroke-width="1" shape-rendering="crispEdges"/></svg>
<div style="left:468px;top:154px;width:79px;height:72px;background:#b3b3b3;box-shadow:inset 1px 1px 0 #e2e2e2,inset -1px -1px 0 #666;"></div>
<svg style="left:471px;top:160.5px" width="14" height="14" viewBox="0 0 14 14"><circle cx="6.5" cy="7" r="5" fill="#fff" stroke="#000" stroke-width="1.2"/><path d="M6.5 3.8 L9.7 7 L6.5 10.2 L3.3 7 Z" fill="#000"/></svg>
<span class="t " style="left:486.20px;top:160.52px;font-size:12px;line-height:12px;color:#000;transform:scaleX(0.8040);">V1</span>
<div style="left:519px;top:158px;width:23px;height:18px;background:#000;box-shadow:1px 1px 0 #e0e0e0, 0 -1px 0 #666, -1px 0 0 #666;"></div>
<svg style="left:519px;top:158px" width="24" height="18" viewBox="0 0 24 18"><polyline points="3.0,14.0 10.5,3.5 19.0,14.0 22.0,10.0" fill="none" stroke="#ffffff" stroke-width="1" shape-rendering="crispEdges"/></svg>
<svg style="left:471px;top:181.1px" width="14" height="14" viewBox="0 0 14 14"><circle cx="6.5" cy="7" r="5" fill="#fff" stroke="#000" stroke-width="1.2"/><path d="M6.5 3.8 L9.7 7 L6.5 10.2 L3.3 7 Z" fill="#000"/></svg>
<span class="t " style="left:486.20px;top:183.12px;font-size:12px;line-height:12px;color:#000;transform:scaleX(0.8040);">V2</span>
<div style="left:519px;top:181px;width:23px;height:18px;background:#000;box-shadow:1px 1px 0 #e0e0e0, 0 -1px 0 #666, -1px 0 0 #666;"></div>
<svg style="left:519px;top:181px" width="24" height="18" viewBox="0 0 24 18"><polyline points="3.0,14.0 12.5,3.5 22.0,14.0" fill="none" stroke="#ff4040" stroke-width="1" shape-rendering="crispEdges"/></svg>
<svg style="left:471px;top:201.7px" width="14" height="14" viewBox="0 0 14 14"><circle cx="6.5" cy="7" r="5" fill="#fff" stroke="#000" stroke-width="1.2"/><path d="M6.5 3.8 L9.7 7 L6.5 10.2 L3.3 7 Z" fill="#000"/></svg>
<span class="t " style="left:486.20px;top:205.72px;font-size:12px;line-height:12px;color:#000;transform:scaleX(0.8040);">V3</span>
<div style="left:519px;top:204px;width:23px;height:18px;background:#000;box-shadow:1px 1px 0 #e0e0e0, 0 -1px 0 #666, -1px 0 0 #666;"></div>
<svg style="left:519px;top:204px" width="24" height="18" viewBox="0 0 24 18"><polyline points="3.0,14.0 10.5,3.5 19.0,14.0 22.0,10.0" fill="none" stroke="#00e000" stroke-width="1" shape-rendering="crispEdges"/></svg>
<svg style="left:556px;top:143px" width="16" height="260" viewBox="0 0 16 260"><rect x="2" y="8" width="12" height="242" fill="#c2c2c2"/><rect x="3" y="9" width="10" height="240" fill="#343434"/><rect x="3" y="9" width="10" height="1" fill="#111"/><path d="M8.3 0.8 L14.5 7 H2 Z" fill="#8c8c8c"/><rect x="2" y="6" width="12.5" height="1" fill="#444"/><path d="M8.5 257.8 L14 252 H3 Z" fill="#8c8c8c"/><path d="M8.2 258 L14.2 251.5" stroke="#3a3a3a" stroke-width="1" fill="none"/></svg>
<svg style="left:544px;top:260px" width="33" height="18" viewBox="0 0 33 18"><path d="M1 9.3 L32 1 V17 Z" fill="#3399ff"/></svg>
<div style="left:18px;top:423px;width:538px;height:252px;border:1px solid #d4d4d4;border-right-color:#666;border-bottom-color:#666"></div>
<div style="left:88px;top:432px;width:460px;height:225px;background:#ececec;"></div>
<div style="left:88px;top:432px;width:1px;height:224px;background:#555;"></div>
<div style="left:88px;top:432px;width:459px;height:1px;background:#555;"></div>
<div style="left:89px;top:433px;width:458px;height:223px;background:#000;"></div>
<span class="t " style="left:62.50px;top:427.14px;font-size:14px;line-height:14px;color:#111;transform:scaleX(0.9505);">2</span>
<span class="t " style="left:62.50px;top:482.69px;font-size:14px;line-height:14px;color:#111;transform:scaleX(0.9505);">1</span>
<span class="t " style="left:62.50px;top:538.24px;font-size:14px;line-height:14px;color:#111;transform:scaleX(0.9505);">0</span>
<span class="t " style="left:54.00px;top:593.79px;font-size:14px;line-height:14px;color:#111;transform:scaleX(0.9784);">−</span>
<span class="t " style="left:62.90px;top:593.79px;font-size:14px;line-height:14px;color:#111;transform:scaleX(0.8991);">1</span>
<span class="t " style="left:54.00px;top:649.34px;font-size:14px;line-height:14px;color:#111;transform:scaleX(0.9784);">−</span>
<span class="t " style="left:62.90px;top:649.34px;font-size:14px;line-height:14px;color:#111;transform:scaleX(0.8991);">2</span>
<div style="left:19px;top:657px;width:538px;height:19px;overflow:hidden"><div style="left:-19px;top:-657px;width:600px;height:700px">
<div style="left:89px;top:658px;width:1px;height:5px;background:#000;"></div>
<span class="t " style="left:86.15px;top:665.12px;font-size:12px;line-height:12px;color:#101020;transform:scaleX(0.9441);">0</span>
<div style="left:181px;top:658px;width:1px;height:5px;background:#000;"></div>
<span class="t " style="left:170.40px;top:665.12px;font-size:12px;line-height:12px;color:#101020;transform:scaleX(0.8735);">0.02</span>
<div style="left:273px;top:658px;width:1px;height:5px;background:#000;"></div>
<span class="t " style="left:262.40px;top:665.12px;font-size:12px;line-height:12px;color:#101020;transform:scaleX(0.8735);">0.04</span>
<div style="left:365px;top:658px;width:1px;height:5px;background:#000;"></div>
<span class="t " style="left:354.40px;top:665.12px;font-size:12px;line-height:12px;color:#101020;transform:scaleX(0.8735);">0.06</span>
<div style="left:457px;top:658px;width:1px;height:5px;background:#000;"></div>
<span class="t " style="left:446.40px;top:665.12px;font-size:12px;line-height:12px;color:#101020;transform:scaleX(0.8735);">0.08</span>
<div style="left:546px;top:658px;width:1px;height:5px;background:#000;"></div>
<span class="t " style="left:529.00px;top:665.12px;font-size:12px;line-height:12px;color:#101020;transform:scaleX(0.9128);">0.0994</span>
</div></div>
<span class="t" style="left:39.8px;top:543.5px;font-size:13px;line-height:13px;font-weight:bold;color:#0a0a2a;transform:translate(-50%,-50%) rotate(-90deg);transform-origin:50% 50%;">Amps</span>
<svg style="left:89px;top:433px" width="458" height="224" viewBox="0 0 458 224"><polyline points="0.0,38.5 0.5,37.1 1.0,35.8 1.5,34.5 2.0,33.4 2.5,32.2 3.0,31.2 3.5,32.0 4.0,32.6 4.5,32.7 5.0,32.4 5.5,31.8 6.0,31.2 6.5,30.9 7.0,31.0 7.5,31.6 8.0,32.4 8.5,33.2 9.0,34.2 9.5,35.2 10.0,36.4 10.5,37.6 11.0,38.8 11.5,40.1 12.0,41.5 12.5,40.7 13.0,39.3 13.5,37.9 14.0,36.6 14.5,35.3 15.0,34.2 15.5,33.1 16.0,32.2 16.5,31.4 17.0,30.8 17.5,30.3 18.0,30.0 18.5,29.8 19.0,29.8 19.5,30.1 20.0,30.5 20.5,31.0 21.0,31.8 21.5,32.7 22.0,33.8 22.5,35.0 23.0,36.3 23.5,37.7 24.0,39.1 24.5,40.6 25.0,42.2 25.5,37.9 26.0,35.4 26.5,33.3 27.0,31.5 27.5,29.7 28.0,28.1 28.5,27.5 29.0,28.0 29.5,28.6 30.0,29.1 30.5,29.8 31.0,30.4 31.5,31.1 32.0,31.7 32.5,32.4 33.0,33.1 33.5,33.9 34.0,34.6 34.5,35.3 35.0,36.1 35.5,36.8 36.0,37.6 36.5,38.3 37.0,39.1 37.5,39.9 38.0,39.6 38.5,37.9 39.0,36.5 39.5,35.3 40.0,34.1 40.5,32.9 41.0,31.8 41.5,31.6 42.0,32.3 42.5,32.7 43.0,32.6 43.5,32.1 44.0,31.5 44.5,31.0 45.0,30.9 45.5,31.2 46.0,31.9 46.5,32.7 47.0,33.6 47.5,34.7 48.0,35.8 48.5,37.0 49.0,38.2 49.5,39.5 50.0,40.9 50.5,42.3 51.0,41.3 51.5,39.7 52.0,38.2 52.5,36.8 53.0,35.4 53.5,34.2 54.0,33.1 54.5,32.1 55.0,31.3 55.5,30.6 56.0,30.2 56.5,29.9 57.0,29.8 57.5,29.9 58.0,30.2 58.5,30.6 59.0,31.2 59.5,31.9 60.0,32.8 60.5,33.8 61.0,34.9 61.5,36.1 62.0,37.3 62.5,38.7 63.0,40.1 63.5,40.3 64.0,37.2 64.5,34.8 65.0,32.8 65.5,30.9 66.0,29.1 66.5,27.5 67.0,27.7 67.5,28.2 68.0,28.8 68.5,29.4 69.0,30.0 69.5,30.7 70.0,31.3 70.5,32.0 71.0,32.7 71.5,33.4 72.0,34.1 72.5,34.9 73.0,35.6 73.5,36.3 74.0,37.1 74.5,37.9 75.0,38.6 75.5,39.4 76.0,40.2 76.5,38.9 77.0,37.4 77.5,36.0 78.0,34.8 78.5,33.6 79.0,32.5 79.5,31.4 80.0,31.9 80.5,32.5 81.0,32.7 81.5,32.5 82.0,31.9 82.5,31.3 83.0,30.9 83.5,30.9 84.0,31.4 84.5,32.2 85.0,33.0 85.5,33.9 86.0,34.8 86.5,35.9 87.0,37.0 87.5,38.1 88.0,39.3 88.5,40.5 89.0,40.8 89.5,39.4 90.0,38.1 90.5,36.7 91.0,35.5 91.5,34.3 92.0,33.3 92.5,32.3 93.0,31.5 93.5,30.9 94.0,30.4 94.5,30.0 95.0,29.8 95.5,29.8 96.0,30.0 96.5,30.4 97.0,30.9 97.5,31.6 98.0,32.5 98.5,33.6 99.0,34.8 99.5,36.1 100.0,37.5 100.5,38.9 101.0,40.5 101.5,42.0 102.0,38.8 102.5,36.1 103.0,33.9 103.5,32.0 104.0,30.2 104.5,28.5 105.0,27.4 105.5,27.9 106.0,28.4 106.5,29.0 107.0,29.6 107.5,30.3 108.0,30.9 108.5,31.6 109.0,32.3 109.5,33.0 110.0,33.7 110.5,34.4 111.0,35.2 111.5,35.9 112.0,36.7 112.5,37.4 113.0,38.2 113.5,38.9 114.0,39.7 114.5,40.0 115.0,38.2 115.5,36.8 116.0,35.5 116.5,34.3 117.0,33.1 117.5,32.0 118.0,31.4 118.5,32.2 119.0,32.6 119.5,32.7 120.0,32.3 120.5,31.6 121.0,31.1 121.5,30.9 122.0,31.1 122.5,31.7 123.0,32.5 123.5,33.3 124.0,34.1 124.5,35.1 125.0,36.1 125.5,37.2 126.0,38.3 126.5,39.4 127.0,40.6 127.5,40.9 128.0,39.4 128.5,38.0 129.0,36.6 129.5,35.3 130.0,34.2 130.5,33.1 131.0,32.1 131.5,31.3 132.0,30.7 132.5,30.2 133.0,29.9 133.5,29.8 134.0,29.9 134.5,30.1 135.0,30.5 135.5,31.1 136.0,31.9 136.5,32.8 137.0,33.8 137.5,35.0 138.0,36.2 138.5,37.6 139.0,39.0 139.5,40.5 140.0,40.9 140.5,37.5 141.0,35.1 141.5,33.0 142.0,31.1 142.5,29.4 143.0,27.8 143.5,27.6 144.0,28.1 144.5,28.7 145.0,29.3 145.5,29.9 146.0,30.5 146.5,31.2 147.0,31.9 147.5,32.6 148.0,33.3 148.5,34.0 149.0,34.7 149.5,35.5 150.0,36.2 150.5,37.0 151.0,37.7 151.5,38.5 152.0,39.3 152.5,40.0 153.0,39.2 153.5,37.6 154.0,36.3 154.5,35.0 155.0,33.8 155.5,32.7 156.0,31.6 156.5,31.7 157.0,32.4 157.5,32.7 158.0,32.5 158.5,32.0 159.0,31.4 159.5,31.0 160.0,30.9 160.5,31.3 161.0,32.0 161.5,32.9 162.0,33.8 162.5,34.8 163.0,35.9 163.5,37.1 164.0,38.4 164.5,39.6 165.0,41.0 165.5,41.3 166.0,39.9 166.5,38.5 167.0,37.2 167.5,35.9 168.0,34.7 168.5,33.6 169.0,32.6 169.5,31.7 170.0,31.0 170.5,30.5 171.0,30.1 171.5,29.9 172.0,29.8 172.5,29.9 173.0,30.3 173.5,30.8 174.0,31.5 174.5,32.3 175.0,33.3 175.5,34.4 176.0,35.7 176.5,37.0 177.0,38.5 177.5,39.9 178.0,41.5 178.5,39.4 179.0,36.5 179.5,34.3 180.0,32.3 180.5,30.5 181.0,28.8 181.5,27.3 182.0,27.8 182.5,28.3 183.0,28.9 183.5,29.5 184.0,30.2 184.5,30.8 185.0,31.5 185.5,32.2 186.0,32.9 186.5,33.6 187.0,34.3 187.5,35.0 188.0,35.8 188.5,36.5 189.0,37.3 189.5,38.0 190.0,38.8 190.5,39.6 191.0,40.3 191.5,38.5 192.0,37.1 192.5,35.8 193.0,34.5 193.5,33.4 194.0,32.2 194.5,31.2 195.0,32.0 195.5,32.6 196.0,32.7 196.5,32.4 197.0,31.8 197.5,31.2 198.0,30.9 198.5,31.0 199.0,31.6 199.5,32.4 200.0,33.2 200.5,34.1 201.0,35.1 201.5,36.1 202.0,37.3 202.5,38.4 203.0,39.6 203.5,40.9 204.0,41.5 204.5,40.0 205.0,38.5 205.5,37.1 206.0,35.8 206.5,34.5 207.0,33.4 207.5,32.4 208.0,31.5 208.5,30.8 209.0,30.3 209.5,30.0 210.0,29.8 210.5,29.8 211.0,30.0 211.5,30.4 212.0,30.9 212.5,31.6 213.0,32.5 213.5,33.5 214.0,34.6 214.5,35.8 215.0,37.1 215.5,38.4 216.0,39.8 216.5,41.3 217.0,37.7 217.5,35.2 218.0,33.2 218.5,31.4 219.0,29.7 219.5,28.1 220.0,27.5 220.5,28.0 221.0,28.6 221.5,29.1 222.0,29.8 222.5,30.4 223.0,31.1 223.5,31.7 224.0,32.4 224.5,33.1 225.0,33.9 225.5,34.6 226.0,35.3 226.5,36.1 227.0,36.8 227.5,37.6 228.0,38.3 228.5,39.1 229.0,39.9 229.5,39.6 230.0,37.9 230.5,36.5 231.0,35.3 231.5,34.1 232.0,32.9 232.5,31.8 233.0,31.6 233.5,32.3 234.0,32.7 234.5,32.6 235.0,32.1 235.5,31.5 236.0,31.0 236.5,30.9 237.0,31.2 237.5,31.9 238.0,32.7 238.5,33.5 239.0,34.5 239.5,35.5 240.0,36.7 240.5,37.8 241.0,39.0 241.5,40.3 242.0,41.6 242.5,40.0 243.0,38.6 243.5,37.3 244.0,36.0 244.5,34.8 245.0,33.7 245.5,32.7 246.0,31.8 246.5,31.1 247.0,30.5 247.5,30.1 248.0,29.9 248.5,29.8 249.0,29.9 249.5,30.2 250.0,30.7 250.5,31.3 251.0,32.2 251.5,33.1 252.0,34.3 252.5,35.5 253.0,36.9 253.5,38.3 254.0,39.8 254.5,41.4 255.0,40.2 255.5,37.1 256.0,34.8 256.5,32.7 257.0,30.9 257.5,29.1 258.0,27.5 258.5,27.7 259.0,28.2 259.5,28.8 260.0,29.4 260.5,30.0 261.0,30.7 261.5,31.3 262.0,32.0 262.5,32.7 263.0,33.4 263.5,34.1 264.0,34.9 264.5,35.6 265.0,36.3 265.5,37.1 266.0,37.9 266.5,38.6 267.0,39.4 267.5,40.2 268.0,38.9 268.5,37.4 269.0,36.0 269.5,34.8 270.0,33.6 270.5,32.5 271.0,31.4 271.5,31.9 272.0,32.5 272.5,32.7 273.0,32.5 273.5,31.9 274.0,31.3 274.5,30.9 275.0,30.9 275.5,31.4 276.0,32.2 276.5,33.0 277.0,33.9 277.5,34.9 278.0,36.0 278.5,37.1 279.0,38.3 279.5,39.5 280.0,40.8 280.5,41.4 281.0,39.9 281.5,38.5 282.0,37.1 282.5,35.8 283.0,34.6 283.5,33.5 284.0,32.5 284.5,31.6 285.0,30.9 285.5,30.4 286.0,30.0 286.5,29.8 287.0,29.8 287.5,30.0 288.0,30.3 288.5,30.9 289.0,31.6 289.5,32.4 290.0,33.4 290.5,34.5 291.0,35.8 291.5,37.1 292.0,38.5 292.5,40.0 293.0,41.5 293.5,38.9 294.0,36.2 294.5,34.0 295.0,32.0 295.5,30.2 296.0,28.5 296.5,27.4 297.0,27.9 297.5,28.4 298.0,29.0 298.5,29.6 299.0,30.3 299.5,30.9 300.0,31.6 300.5,32.3 301.0,33.0 301.5,33.7 302.0,34.4 302.5,35.2 303.0,35.9 303.5,36.7 304.0,37.4 304.5,38.2 305.0,38.9 305.5,39.7 306.0,40.0 306.5,38.2 307.0,36.8 307.5,35.5 308.0,34.3 308.5,33.1 309.0,32.0 309.5,31.4 310.0,32.2 310.5,32.6 311.0,32.7 311.5,32.3 312.0,31.6 312.5,31.1 313.0,30.9 313.5,31.1 314.0,31.7 314.5,32.5 315.0,33.3 315.5,34.1 316.0,35.1 316.5,36.1 317.0,37.2 317.5,38.3 318.0,39.4 318.5,40.6 319.0,40.6 319.5,39.1 320.0,37.8 320.5,36.4 321.0,35.2 321.5,34.0 322.0,33.0 322.5,32.1 323.0,31.3 323.5,30.7 324.0,30.2 324.5,29.9 325.0,29.8 325.5,29.9 326.0,30.1 326.5,30.5 327.0,31.2 327.5,31.9 328.0,32.9 328.5,33.9 329.0,35.1 329.5,36.4 330.0,37.8 330.5,39.3 331.0,40.8 331.5,40.5 332.0,37.1 332.5,34.8 333.0,32.8 333.5,31.0 334.0,29.4 334.5,27.8 335.0,27.6 335.5,28.1 336.0,28.7 336.5,29.3 337.0,29.9 337.5,30.5 338.0,31.2 338.5,31.9 339.0,32.6 339.5,33.3 340.0,34.0 340.5,34.7 341.0,35.5 341.5,36.2 342.0,37.0 342.5,37.7 343.0,38.5 343.5,39.3 344.0,40.0 344.5,39.2 345.0,37.6 345.5,36.3 346.0,35.0 346.5,33.8 347.0,32.7 347.5,31.6 348.0,31.7 348.5,32.4 349.0,32.7 349.5,32.5 350.0,32.0 350.5,31.4 351.0,31.0 351.5,30.9 352.0,31.3 352.5,32.0 353.0,32.8 353.5,33.6 354.0,34.5 354.5,35.5 355.0,36.6 355.5,37.7 356.0,38.8 356.5,40.0 357.0,41.1 357.5,39.7 358.0,38.4 358.5,37.0 359.0,35.8 359.5,34.6 360.0,33.5 360.5,32.5 361.0,31.7 361.5,31.0 362.0,30.4 362.5,30.1 363.0,29.9 363.5,29.8 364.0,29.9 364.5,30.3 365.0,30.8 365.5,31.5 366.0,32.3 366.5,33.4 367.0,34.5 367.5,35.8 368.0,37.1 368.5,38.6 369.0,40.1 369.5,41.6 370.0,39.5 370.5,36.7 371.0,34.4 371.5,32.4 372.0,30.5 372.5,28.8 373.0,27.3 373.5,27.8 374.0,28.3 374.5,28.9 375.0,29.5 375.5,30.2 376.0,30.8 376.5,31.5 377.0,32.2 377.5,32.9 378.0,33.6 378.5,34.3 379.0,35.0 379.5,35.8 380.0,36.5 380.5,37.3 381.0,38.0 381.5,38.8 382.0,39.6 382.5,40.3 383.0,38.5 383.5,37.1 384.0,35.8 384.5,34.5 385.0,33.4 385.5,32.2 386.0,31.2 386.5,32.0 387.0,32.6 387.5,32.7 388.0,32.4 388.5,31.8 389.0,31.2 389.5,30.9 390.0,31.0 390.5,31.6 391.0,32.4 391.5,33.2 392.0,34.1 392.5,35.1 393.0,36.1 393.5,37.3 394.0,38.4 394.5,39.6 395.0,40.9 395.5,41.3 396.0,39.8 396.5,38.4 397.0,37.0 397.5,35.7 398.0,34.4 398.5,33.3 399.0,32.3 399.5,31.5 400.0,30.8 400.5,30.3 401.0,30.0 401.5,29.8 402.0,29.8 402.5,30.0 403.0,30.4 403.5,31.0 404.0,31.7 404.5,32.5 405.0,33.5 405.5,34.7 406.0,35.9 406.5,37.2 407.0,38.6 407.5,40.0 408.0,41.5 408.5,38.0 409.0,35.5 409.5,33.4 410.0,31.5 410.5,29.8 411.0,28.1 411.5,27.5 412.0,28.0 412.5,28.6 413.0,29.1 413.5,29.8 414.0,30.4 414.5,31.1 415.0,31.7 415.5,32.4 416.0,33.1 416.5,33.9 417.0,34.6 417.5,35.3 418.0,36.1 418.5,36.8 419.0,37.6 419.5,38.3 420.0,39.1 420.5,39.9 421.0,39.6 421.5,37.9 422.0,36.5 422.5,35.3 423.0,34.1 423.5,32.9 424.0,31.8 424.5,31.6 425.0,32.3 425.5,32.7 426.0,32.6 426.5,32.1 427.0,31.5 427.5,31.0 428.0,30.9 428.5,31.2 429.0,31.9 429.5,32.7 430.0,33.6 430.5,34.6 431.0,35.6 431.5,36.8 432.0,38.0 432.5,39.2 433.0,40.5 433.5,41.9 434.0,40.3 434.5,38.9 435.0,37.5 435.5,36.2 436.0,35.0 436.5,33.8 437.0,32.8 437.5,31.9 438.0,31.2 438.5,30.6 439.0,30.1 439.5,29.9 440.0,29.8 440.5,29.9 441.0,30.2 441.5,30.7 442.0,31.3 442.5,32.1 443.0,33.0 443.5,34.1 444.0,35.4 444.5,36.7 445.0,38.1 445.5,39.5 446.0,41.0 446.5,39.7 447.0,36.7 447.5,34.5 448.0,32.5 448.5,30.7 449.0,29.0 449.5,27.5 450.0,27.7 450.5,28.2 451.0,28.8 451.5,29.4 452.0,30.0 452.5,30.7 453.0,31.3 453.5,32.0 454.0,32.7 454.5,33.4 455.0,34.1 455.5,34.9 456.0,35.6 456.5,36.3 457.0,37.1 457.5,37.9" fill="none" stroke="#00e000" stroke-width="2" shape-rendering="crispEdges"/><polyline points="0.0,35.0 0.5,33.7 1.0,32.5 1.5,31.3 2.0,30.2 2.5,29.6 3.0,30.4 3.5,30.8 4.0,30.9 4.5,30.5 5.0,29.8 5.5,29.3 6.0,29.1 6.5,29.3 7.0,29.9 7.5,30.8 8.0,31.6 8.5,32.6 9.0,33.7 9.5,34.8 10.0,36.0 10.5,37.3 11.0,38.6 11.5,39.9 12.0,38.6 12.5,37.2 13.0,35.8 13.5,34.5 14.0,33.3 14.5,32.2 15.0,31.1 15.5,30.2 16.0,29.5 16.5,28.9 17.0,28.4 17.5,28.1 18.0,28.0 18.5,28.1 19.0,28.3 19.5,28.8 20.0,29.4 20.5,30.2 21.0,31.1 21.5,32.2 22.0,33.4 22.5,34.7 23.0,36.1 23.5,37.6 24.0,39.1 24.5,39.0 25.0,35.5 25.5,33.2 26.0,31.1 26.5,29.3 27.0,27.6 27.5,26.0 28.0,25.8 28.5,26.3 29.0,26.9 29.5,27.5 30.0,28.1 30.5,28.7 31.0,29.4 31.5,30.1 32.0,30.8 32.5,31.5 33.0,32.2 33.5,32.9 34.0,33.7 34.5,34.4 35.0,35.2 35.5,35.9 36.0,36.7 36.5,37.5 37.0,38.2 37.5,37.4 38.0,35.8 38.5,34.5 39.0,33.2 39.5,32.0 40.0,30.9 40.5,29.8 41.0,29.9 41.5,30.6 42.0,30.9 42.5,30.7 43.0,30.2 43.5,29.6 44.0,29.2 44.5,29.1 45.0,29.5 45.5,30.2 46.0,31.1 46.5,32.0 47.0,33.1 47.5,34.2 48.0,35.4 48.5,36.7 49.0,38.0 49.5,39.4 50.0,40.7 50.5,39.2 51.0,37.6 51.5,36.1 52.0,34.7 52.5,33.4 53.0,32.2 53.5,31.1 54.0,30.1 54.5,29.3 55.0,28.7 55.5,28.3 56.0,28.1 56.5,28.0 57.0,28.1 57.5,28.4 58.0,28.9 58.5,29.5 59.0,30.3 59.5,31.2 60.0,32.2 60.5,33.3 61.0,34.5 61.5,35.8 62.0,37.2 62.5,38.5 63.0,37.7 63.5,34.9 64.0,32.6 64.5,30.6 65.0,28.7 65.5,27.0 66.0,25.5 66.5,26.0 67.0,26.5 67.5,27.1 68.0,27.7 68.5,28.4 69.0,29.0 69.5,29.7 70.0,30.4 70.5,31.1 71.0,31.8 71.5,32.5 72.0,33.2 72.5,34.0 73.0,34.7 73.5,35.5 74.0,36.2 74.5,37.0 75.0,37.8 75.5,38.5 76.0,36.7 76.5,35.3 77.0,34.0 77.5,32.7 78.0,31.6 78.5,30.4 79.0,29.4 79.5,30.2 80.0,30.8 80.5,30.9 81.0,30.6 81.5,30.0 82.0,29.4 82.5,29.1 83.0,29.2 83.5,29.8 84.0,30.6 84.5,31.3 85.0,32.2 85.5,33.2 86.0,34.3 86.5,35.4 87.0,36.6 87.5,37.7 88.0,39.0 88.5,38.7 89.0,37.3 89.5,36.0 90.0,34.7 90.5,33.5 91.0,32.3 91.5,31.3 92.0,30.4 92.5,29.6 93.0,29.0 93.5,28.5 94.0,28.2 94.5,28.0 95.0,28.0 95.5,28.3 96.0,28.7 96.5,29.3 97.0,30.0 97.5,30.9 98.0,32.0 98.5,33.2 99.0,34.5 99.5,35.9 100.0,37.4 100.5,39.0 101.0,40.5 101.5,36.4 102.0,33.9 102.5,31.7 103.0,29.8 103.5,28.0 104.0,26.3 104.5,25.7 105.0,26.2 105.5,26.8 106.0,27.3 106.5,28.0 107.0,28.6 107.5,29.3 108.0,29.9 108.5,30.6 109.0,31.3 109.5,32.1 110.0,32.8 110.5,33.5 111.0,34.3 111.5,35.0 112.0,35.8 112.5,36.5 113.0,37.3 113.5,38.1 114.0,37.8 114.5,36.1 115.0,34.7 115.5,33.5 116.0,32.3 116.5,31.1 117.0,30.0 117.5,29.8 118.0,30.5 118.5,30.9 119.0,30.8 119.5,30.3 120.0,29.7 120.5,29.2 121.0,29.1 121.5,29.4 122.0,30.1 122.5,30.9 123.0,31.6 123.5,32.5 124.0,33.5 124.5,34.5 125.0,35.6 125.5,36.7 126.0,37.9 126.5,39.0 127.0,38.8 127.5,37.3 128.0,35.9 128.5,34.6 129.0,33.3 129.5,32.1 130.0,31.1 130.5,30.2 131.0,29.4 131.5,28.8 132.0,28.3 132.5,28.1 133.0,28.0 133.5,28.1 134.0,28.4 134.5,28.8 135.0,29.5 135.5,30.2 136.0,31.2 136.5,32.2 137.0,33.4 137.5,34.7 138.0,36.1 138.5,37.5 139.0,39.0 139.5,38.2 140.0,35.1 140.5,32.8 141.0,30.8 141.5,29.0 142.0,27.3 142.5,25.7 143.0,25.9 143.5,26.4 144.0,27.0 144.5,27.6 145.0,28.2 145.5,28.9 146.0,29.5 146.5,30.2 147.0,30.9 147.5,31.6 148.0,32.3 148.5,33.1 149.0,33.8 149.5,34.5 150.0,35.3 150.5,36.1 151.0,36.8 151.5,37.6 152.0,38.4 152.5,37.1 153.0,35.6 153.5,34.2 154.0,33.0 154.5,31.8 155.0,30.7 155.5,29.6 156.0,30.1 156.5,30.7 157.0,30.9 157.5,30.7 158.0,30.1 158.5,29.5 159.0,29.1 159.5,29.1 160.0,29.6 160.5,30.4 161.0,31.2 161.5,32.2 162.0,33.2 162.5,34.4 163.0,35.6 163.5,36.8 164.0,38.1 164.5,39.4 165.0,39.2 165.5,37.8 166.0,36.4 166.5,35.1 167.0,33.8 167.5,32.6 168.0,31.6 168.5,30.6 169.0,29.8 169.5,29.1 170.0,28.6 170.5,28.2 171.0,28.0 171.5,28.0 172.0,28.2 172.5,28.6 173.0,29.1 173.5,29.8 174.0,30.7 174.5,31.7 175.0,32.9 175.5,34.1 176.0,35.5 176.5,36.9 177.0,38.4 177.5,40.0 178.0,36.9 178.5,34.3 179.0,32.1 179.5,30.1 180.0,28.3 180.5,26.6 181.0,25.6 181.5,26.1 182.0,26.6 182.5,27.2 183.0,27.8 183.5,28.5 184.0,29.1 184.5,29.8 185.0,30.5 185.5,31.2 186.0,31.9 186.5,32.6 187.0,33.4 187.5,34.1 188.0,34.9 188.5,35.6 189.0,36.4 189.5,37.1 190.0,37.9 190.5,38.2 191.0,36.4 191.5,35.0 192.0,33.7 192.5,32.5 193.0,31.3 193.5,30.2 194.0,29.6 194.5,30.4 195.0,30.8 195.5,30.9 196.0,30.5 196.5,29.8 197.0,29.3 197.5,29.1 198.0,29.3 198.5,29.9 199.0,30.8 199.5,31.5 200.0,32.5 200.5,33.5 201.0,34.6 201.5,35.7 202.0,36.9 202.5,38.1 203.0,39.3 203.5,39.4 204.0,37.9 204.5,36.5 205.0,35.0 205.5,33.7 206.0,32.5 206.5,31.4 207.0,30.4 207.5,29.6 208.0,28.9 208.5,28.4 209.0,28.1 209.5,28.0 210.0,28.1 210.5,28.3 211.0,28.7 211.5,29.3 212.0,30.0 212.5,30.9 213.0,31.9 213.5,33.0 214.0,34.2 214.5,35.5 215.0,36.9 215.5,38.3 216.0,38.7 216.5,35.3 217.0,33.0 217.5,31.0 218.0,29.2 218.5,27.6 219.0,26.0 219.5,25.8 220.0,26.3 220.5,26.9 221.0,27.5 221.5,28.1 222.0,28.7 222.5,29.4 223.0,30.1 223.5,30.8 224.0,31.5 224.5,32.2 225.0,32.9 225.5,33.7 226.0,34.4 226.5,35.2 227.0,35.9 227.5,36.7 228.0,37.5 228.5,38.2 229.0,37.4 229.5,35.8 230.0,34.5 230.5,33.2 231.0,32.0 231.5,30.9 232.0,29.8 232.5,29.9 233.0,30.6 233.5,30.9 234.0,30.7 234.5,30.2 235.0,29.6 235.5,29.2 236.0,29.1 236.5,29.5 237.0,30.2 237.5,31.0 238.0,31.9 238.5,32.9 239.0,34.0 239.5,35.1 240.0,36.3 240.5,37.5 241.0,38.7 241.5,39.3 242.0,37.9 242.5,36.5 243.0,35.2 243.5,33.9 244.0,32.8 244.5,31.7 245.0,30.7 245.5,29.9 246.0,29.2 246.5,28.6 247.0,28.3 247.5,28.1 248.0,28.0 248.5,28.1 249.0,28.5 249.5,29.0 250.0,29.7 250.5,30.5 251.0,31.6 251.5,32.7 252.0,34.0 252.5,35.4 253.0,36.8 253.5,38.3 254.0,39.9 254.5,37.7 255.0,34.8 255.5,32.5 256.0,30.5 256.5,28.7 257.0,27.0 257.5,25.5 258.0,26.0 258.5,26.5 259.0,27.1 259.5,27.7 260.0,28.4 260.5,29.0 261.0,29.7 261.5,30.4 262.0,31.1 262.5,31.8 263.0,32.5 263.5,33.2 264.0,34.0 264.5,34.7 265.0,35.5 265.5,36.2 266.0,37.0 266.5,37.8 267.0,38.5 267.5,36.7 268.0,35.3 268.5,34.0 269.0,32.7 269.5,31.6 270.0,30.4 270.5,29.4 271.0,30.2 271.5,30.8 272.0,30.9 272.5,30.6 273.0,30.0 273.5,29.4 274.0,29.1 274.5,29.2 275.0,29.8 275.5,30.6 276.0,31.4 276.5,32.3 277.0,33.3 277.5,34.4 278.0,35.6 278.5,36.8 279.0,38.0 279.5,39.3 280.0,39.3 280.5,37.8 281.0,36.4 281.5,35.0 282.0,33.7 282.5,32.5 283.0,31.5 283.5,30.5 284.0,29.7 284.5,29.0 285.0,28.5 285.5,28.2 286.0,28.0 286.5,28.0 287.0,28.2 287.5,28.6 288.0,29.2 288.5,29.9 289.0,30.8 289.5,31.8 290.0,33.0 290.5,34.2 291.0,35.6 291.5,37.0 292.0,38.5 292.5,40.0 293.0,36.5 293.5,33.9 294.0,31.8 294.5,29.8 295.0,28.0 295.5,26.3 296.0,25.7 296.5,26.2 297.0,26.8 297.5,27.3 298.0,28.0 298.5,28.6 299.0,29.3 299.5,29.9 300.0,30.6 300.5,31.3 301.0,32.1 301.5,32.8 302.0,33.5 302.5,34.3 303.0,35.0 303.5,35.8 304.0,36.5 304.5,37.3 305.0,38.1 305.5,37.8 306.0,36.1 306.5,34.7 307.0,33.5 307.5,32.3 308.0,31.1 308.5,30.0 309.0,29.8 309.5,30.5 310.0,30.9 310.5,30.8 311.0,30.3 311.5,29.7 312.0,29.2 312.5,29.1 313.0,29.4 313.5,30.1 314.0,30.9 314.5,31.6 315.0,32.5 315.5,33.5 316.0,34.5 316.5,35.6 317.0,36.7 317.5,37.9 318.0,39.0 318.5,38.5 319.0,37.1 319.5,35.7 320.0,34.4 320.5,33.1 321.0,32.0 321.5,31.0 322.0,30.1 322.5,29.4 323.0,28.8 323.5,28.3 324.0,28.1 324.5,28.0 325.0,28.1 325.5,28.4 326.0,28.9 326.5,29.5 327.0,30.3 327.5,31.3 328.0,32.4 328.5,33.6 329.0,34.9 329.5,36.3 330.0,37.8 330.5,39.3 331.0,37.8 331.5,34.8 332.0,32.6 332.5,30.6 333.0,28.9 333.5,27.2 334.0,25.7 334.5,25.9 335.0,26.4 335.5,27.0 336.0,27.6 336.5,28.2 337.0,28.9 337.5,29.5 338.0,30.2 338.5,30.9 339.0,31.6 339.5,32.3 340.0,33.1 340.5,33.8 341.0,34.5 341.5,35.3 342.0,36.1 342.5,36.8 343.0,37.6 343.5,38.4 344.0,37.1 344.5,35.6 345.0,34.2 345.5,33.0 346.0,31.8 346.5,30.7 347.0,29.6 347.5,30.1 348.0,30.7 348.5,30.9 349.0,30.7 349.5,30.1 350.0,29.5 350.5,29.1 351.0,29.1 351.5,29.6 352.0,30.4 352.5,31.2 353.0,32.0 353.5,32.9 354.0,33.9 354.5,35.0 355.0,36.1 355.5,37.2 356.0,38.4 356.5,39.0 357.0,37.7 357.5,36.3 358.0,35.0 358.5,33.7 359.0,32.6 359.5,31.5 360.0,30.6 360.5,29.7 361.0,29.1 361.5,28.6 362.0,28.2 362.5,28.0 363.0,28.0 363.5,28.2 364.0,28.6 364.5,29.1 365.0,29.8 365.5,30.7 366.0,31.8 366.5,32.9 367.0,34.2 367.5,35.6 368.0,37.1 368.5,38.6 369.0,40.2 369.5,37.1 370.0,34.4 370.5,32.2 371.0,30.2 371.5,28.4 372.0,26.7 372.5,25.6 373.0,26.1 373.5,26.6 374.0,27.2 374.5,27.8 375.0,28.5 375.5,29.1 376.0,29.8 376.5,30.5 377.0,31.2 377.5,31.9 378.0,32.6 378.5,33.4 379.0,34.1 379.5,34.9 380.0,35.6 380.5,36.4 381.0,37.1 381.5,37.9 382.0,38.2 382.5,36.4 383.0,35.0 383.5,33.7 384.0,32.5 384.5,31.3 385.0,30.2 385.5,29.6 386.0,30.4 386.5,30.8 387.0,30.9 387.5,30.5 388.0,29.8 388.5,29.3 389.0,29.1 389.5,29.3 390.0,29.9 390.5,30.8 391.0,31.5 391.5,32.5 392.0,33.5 392.5,34.6 393.0,35.7 393.5,36.9 394.0,38.1 394.5,39.3 395.0,39.2 395.5,37.7 396.0,36.3 396.5,34.9 397.0,33.6 397.5,32.4 398.0,31.3 398.5,30.4 399.0,29.6 399.5,28.9 400.0,28.4 400.5,28.1 401.0,28.0 401.5,28.1 402.0,28.3 402.5,28.7 403.0,29.3 403.5,30.0 404.0,30.9 404.5,32.0 405.0,33.1 405.5,34.4 406.0,35.7 406.5,37.1 407.0,38.5 407.5,39.1 408.0,35.6 408.5,33.2 409.0,31.2 409.5,29.3 410.0,27.6 410.5,26.0 411.0,25.8 411.5,26.3 412.0,26.9 412.5,27.5 413.0,28.1 413.5,28.7 414.0,29.4 414.5,30.1 415.0,30.8 415.5,31.5 416.0,32.2 416.5,32.9 417.0,33.7 417.5,34.4 418.0,35.2 418.5,35.9 419.0,36.7 419.5,37.5 420.0,38.2 420.5,37.4 421.0,35.8 421.5,34.5 422.0,33.2 422.5,32.0 423.0,30.9 423.5,29.8 424.0,29.9 424.5,30.6 425.0,30.9 425.5,30.7 426.0,30.2 426.5,29.6 427.0,29.2 427.5,29.1 428.0,29.5 428.5,30.2 429.0,31.1 429.5,32.0 430.0,33.0 430.5,34.1 431.0,35.2 431.5,36.4 432.0,37.7 432.5,39.0 433.0,39.6 433.5,38.2 434.0,36.8 434.5,35.4 435.0,34.1 435.5,32.9 436.0,31.8 436.5,30.8 437.0,29.9 437.5,29.2 438.0,28.7 438.5,28.3 439.0,28.1 439.5,28.0 440.0,28.1 440.5,28.5 441.0,29.0 441.5,29.6 442.0,30.5 442.5,31.5 443.0,32.6 443.5,33.8 444.0,35.1 444.5,36.6 445.0,38.0 445.5,39.5 446.0,37.2 446.5,34.4 447.0,32.3 447.5,30.3 448.0,28.6 448.5,26.9 449.0,25.5 449.5,26.0 450.0,26.5 450.5,27.1 451.0,27.7 451.5,28.4 452.0,29.0 452.5,29.7 453.0,30.4 453.5,31.1 454.0,31.8 454.5,32.5 455.0,33.2 455.5,34.0 456.0,34.7 456.5,35.5 457.0,36.2 457.5,37.0" fill="none" stroke="#ff4040" stroke-width="2" shape-rendering="crispEdges"/><polyline points="0.0,35.3 0.5,34.0 1.0,32.8 1.5,31.6 2.0,30.5 2.5,29.9 3.0,30.7 3.5,31.1 4.0,31.2 4.5,30.8 5.0,30.1 5.5,29.6 6.0,29.4 6.5,29.6 7.0,30.2 7.5,31.1 8.0,31.9 8.5,32.9 9.0,34.0 9.5,35.1 10.0,36.3 10.5,37.6 11.0,38.9 11.5,40.2 12.0,38.9 12.5,37.5 13.0,36.1 13.5,34.8 14.0,33.6 14.5,32.5 15.0,31.4 15.5,30.5 16.0,29.8 16.5,29.2 17.0,28.7 17.5,28.4 18.0,28.3 18.5,28.4 19.0,28.6 19.5,29.1 20.0,29.7 20.5,30.5 21.0,31.4 21.5,32.5 22.0,33.7 22.5,35.0 23.0,36.4 23.5,37.9 24.0,39.4 24.5,39.3 25.0,35.8 25.5,118.9 26.0,109.2 26.5,109.7 27.0,109.2 27.5,109.3 28.0,109.9 28.5,109.3 29.0,109.6 29.5,109.5 30.0,109.5 30.5,109.5 31.0,109.3 31.5,109.8 32.0,109.2 32.5,109.3 33.0,109.1 33.5,109.3 34.0,109.4 34.5,109.8 35.0,109.4 35.5,109.2 36.0,109.3 36.5,109.9 37.0,109.2 37.5,109.6 38.0,192.5 38.5,192.8 39.0,186.4 39.5,186.8 40.0,186.6 40.5,186.7 41.0,187.0 41.5,186.5 42.0,185.9 42.5,185.7 43.0,186.5 43.5,185.9 44.0,185.4 44.5,186.0 45.0,185.5 45.5,185.6 46.0,185.6 46.5,184.8 47.0,184.8 47.5,184.9 48.0,182.6 48.5,181.7 49.0,179.5 49.5,178.5 50.0,177.6 50.5,179.4 51.0,180.8 51.5,182.0 52.0,183.3 52.5,184.8 53.0,185.7 53.5,186.1 54.0,186.1 54.5,187.4 55.0,187.5 55.5,188.1 56.0,188.0 56.5,187.8 57.0,187.4 57.5,187.6 58.0,187.3 58.5,187.3 59.0,187.0 59.5,186.7 60.0,186.0 60.5,184.9 61.0,184.6 61.5,184.0 62.0,184.0 62.5,183.9 63.0,182.7 63.5,99.7 64.0,99.3 64.5,109.1 65.0,109.7 65.5,109.4 66.0,109.2 66.5,109.4 67.0,109.3 67.5,109.4 68.0,109.5 68.5,109.4 69.0,109.6 69.5,109.3 70.0,109.2 70.5,109.2 71.0,109.2 71.5,109.5 72.0,109.4 72.5,109.7 73.0,109.5 73.5,109.7 74.0,109.9 74.5,109.2 75.0,109.1 75.5,109.2 76.0,109.4 76.5,35.6 77.0,34.3 77.5,33.0 78.0,31.9 78.5,30.7 79.0,29.7 79.5,30.5 80.0,31.1 80.5,31.2 81.0,30.9 81.5,30.3 82.0,29.7 82.5,29.4 83.0,29.5 83.5,30.1 84.0,30.9 84.5,31.6 85.0,32.5 85.5,33.5 86.0,34.6 86.5,35.7 87.0,36.9 87.5,38.0 88.0,39.3 88.5,39.0 89.0,37.6 89.5,36.3 90.0,35.0 90.5,33.8 91.0,32.6 91.5,31.6 92.0,30.7 92.5,29.9 93.0,29.3 93.5,28.8 94.0,28.5 94.5,28.3 95.0,28.3 95.5,28.6 96.0,29.0 96.5,29.6 97.0,30.3 97.5,31.2 98.0,32.3 98.5,33.5 99.0,34.8 99.5,36.2 100.0,37.7 100.5,39.3 101.0,40.8 101.5,36.7 102.0,118.3 102.5,118.6 103.0,109.3 103.5,109.5 104.0,109.9 104.5,109.2 105.0,109.4 105.5,109.6 106.0,109.2 106.5,109.2 107.0,109.8 107.5,109.9 108.0,109.4 108.5,109.3 109.0,109.9 109.5,109.4 110.0,109.6 110.5,109.6 111.0,109.6 111.5,109.8 112.0,109.9 112.5,109.7 113.0,109.8 113.5,109.7 114.0,109.6 114.5,192.5 115.0,192.3 115.5,186.4 116.0,187.0 116.5,186.8 117.0,186.2 117.5,187.0 118.0,186.2 118.5,186.5 119.0,186.1 119.5,185.8 120.0,185.6 120.5,185.8 121.0,185.5 121.5,185.6 122.0,185.5 122.5,185.5 123.0,185.4 123.5,185.1 124.0,185.3 124.5,183.3 125.0,182.1 125.5,180.5 126.0,179.0 126.5,176.7 127.0,178.7 127.5,180.2 128.0,181.3 128.5,183.1 129.0,185.1 129.5,185.1 130.0,185.5 130.5,186.5 131.0,186.8 131.5,187.8 132.0,188.2 132.5,188.6 133.0,188.4 133.5,187.6 134.0,188.0 134.5,187.2 135.0,187.0 135.5,187.1 136.0,186.2 136.5,185.2 137.0,185.3 137.5,185.3 138.0,184.0 138.5,183.7 139.0,183.9 139.5,183.1 140.0,182.6 140.5,99.4 141.0,109.8 141.5,109.5 142.0,109.4 142.5,109.4 143.0,109.7 143.5,109.1 144.0,109.5 144.5,109.6 145.0,109.1 145.5,109.4 146.0,109.4 146.5,109.6 147.0,109.5 147.5,109.5 148.0,109.3 148.5,109.4 149.0,109.8 149.5,109.2 150.0,109.2 150.5,109.2 151.0,109.1 151.5,109.2 152.0,109.3 152.5,109.7 153.0,35.9 153.5,34.5 154.0,33.3 154.5,32.1 155.0,31.0 155.5,29.9 156.0,30.4 156.5,31.0 157.0,31.2 157.5,31.0 158.0,30.4 158.5,29.8 159.0,29.4 159.5,29.4 160.0,29.9 160.5,30.7 161.0,31.5 161.5,32.5 162.0,33.5 162.5,34.7 163.0,35.9 163.5,37.1 164.0,38.4 164.5,39.7 165.0,39.5 165.5,38.1 166.0,36.7 166.5,35.4 167.0,34.1 167.5,32.9 168.0,31.9 168.5,30.9 169.0,30.1 169.5,29.4 170.0,28.9 170.5,28.5 171.0,28.3 171.5,28.3 172.0,28.5 172.5,28.9 173.0,29.4 173.5,30.1 174.0,31.0 174.5,32.0 175.0,33.2 175.5,34.4 176.0,35.8 176.5,37.2 177.0,38.7 177.5,40.3 178.0,37.2 178.5,118.6 179.0,118.5 179.5,109.6 180.0,109.7 180.5,109.9 181.0,109.6 181.5,109.7 182.0,109.6 182.5,109.5 183.0,109.8 183.5,109.9 184.0,109.6 184.5,109.6 185.0,109.1 185.5,109.8 186.0,109.6 186.5,109.6 187.0,109.2 187.5,109.6 188.0,109.6 188.5,109.2 189.0,109.4 189.5,109.7 190.0,109.7 190.5,109.7 191.0,109.6 191.5,193.1 192.0,186.9 192.5,186.2 193.0,186.5 193.5,186.1 194.0,187.0 194.5,186.7 195.0,186.1 195.5,185.9 196.0,185.8 196.5,186.0 197.0,185.8 197.5,185.2 198.0,185.7 198.5,185.2 199.0,185.0 199.5,185.6 200.0,185.4 200.5,185.2 201.0,184.0 201.5,182.1 202.0,180.0 202.5,178.8 203.0,177.5 203.5,178.8 204.0,179.7 204.5,181.0 205.0,183.4 205.5,185.0 206.0,185.8 206.5,185.9 207.0,186.2 207.5,186.6 208.0,186.9 208.5,187.6 209.0,188.2 209.5,188.6 210.0,188.4 210.5,187.8 211.0,187.3 211.5,187.9 212.0,186.8 212.5,186.2 213.0,186.0 213.5,185.5 214.0,185.4 214.5,184.6 215.0,184.3 215.5,184.0 216.0,183.6 216.5,183.1 217.0,99.5 217.5,109.6 218.0,109.7 218.5,109.1 219.0,109.5 219.5,109.4 220.0,109.7 220.5,109.3 221.0,109.8 221.5,109.3 222.0,109.5 222.5,109.5 223.0,109.3 223.5,109.7 224.0,109.7 224.5,109.9 225.0,109.4 225.5,109.8 226.0,109.6 226.5,109.7 227.0,109.2 227.5,109.5 228.0,109.7 228.5,109.6 229.0,109.2 229.5,36.1 230.0,34.8 230.5,33.5 231.0,32.3 231.5,31.2 232.0,30.1 232.5,30.2 233.0,30.9 233.5,31.2 234.0,31.0 234.5,30.5 235.0,29.9 235.5,29.5 236.0,29.4 236.5,29.8 237.0,30.5 237.5,31.3 238.0,32.2 238.5,33.2 239.0,34.3 239.5,35.4 240.0,36.6 240.5,37.8 241.0,39.0 241.5,39.6 242.0,38.2 242.5,36.8 243.0,35.5 243.5,34.2 244.0,33.1 244.5,32.0 245.0,31.0 245.5,30.2 246.0,29.5 246.5,28.9 247.0,28.6 247.5,28.4 248.0,28.3 248.5,28.4 249.0,28.8 249.5,29.3 250.0,30.0 250.5,30.8 251.0,31.9 251.5,33.0 252.0,34.3 252.5,35.7 253.0,37.1 253.5,38.6 254.0,40.2 254.5,38.0 255.0,118.3 255.5,118.9 256.0,109.8 256.5,109.7 257.0,109.8 257.5,109.1 258.0,109.7 258.5,109.2 259.0,109.4 259.5,109.5 260.0,109.3 260.5,109.5 261.0,109.5 261.5,109.1 262.0,109.3 262.5,109.5 263.0,109.7 263.5,109.7 264.0,109.3 264.5,109.8 265.0,109.7 265.5,109.7 266.0,109.3 266.5,109.8 267.0,109.8 267.5,109.4 268.0,192.8 268.5,187.0 269.0,187.0 269.5,186.8 270.0,186.8 270.5,186.2 271.0,186.9 271.5,186.6 272.0,186.3 272.5,186.5 273.0,186.3 273.5,186.3 274.0,185.9 274.5,185.5 275.0,185.5 275.5,184.8 276.0,185.0 276.5,184.7 277.0,184.5 277.5,183.5 278.0,182.6 278.5,180.4 279.0,179.1 279.5,177.8 280.0,177.8 280.5,179.7 281.0,180.9 281.5,182.8 282.0,184.5 282.5,185.7 283.0,185.7 283.5,186.0 284.0,186.6 284.5,187.5 285.0,187.2 285.5,188.5 286.0,188.4 286.5,188.3 287.0,187.5 287.5,187.8 288.0,187.1 288.5,187.0 289.0,186.5 289.5,186.4 290.0,185.7 290.5,185.0 291.0,184.6 291.5,184.2 292.0,183.9 292.5,183.1 293.0,182.7 293.5,99.9 294.0,99.3 294.5,109.1 295.0,109.8 295.5,109.9 296.0,109.4 296.5,109.7 297.0,109.2 297.5,109.1 298.0,109.1 298.5,109.1 299.0,109.4 299.5,109.1 300.0,109.6 300.5,109.5 301.0,109.3 301.5,109.7 302.0,109.5 302.5,109.7 303.0,109.1 303.5,109.5 304.0,109.8 304.5,109.5 305.0,109.7 305.5,109.1 306.0,36.4 306.5,35.0 307.0,33.8 307.5,32.6 308.0,31.4 308.5,30.3 309.0,30.1 309.5,30.8 310.0,31.2 310.5,31.1 311.0,30.6 311.5,30.0 312.0,29.5 312.5,29.4 313.0,29.7 313.5,30.4 314.0,31.2 314.5,31.9 315.0,32.8 315.5,33.8 316.0,34.8 316.5,35.9 317.0,37.0 317.5,38.2 318.0,39.3 318.5,38.8 319.0,37.4 319.5,36.0 320.0,34.7 320.5,33.4 321.0,32.3 321.5,31.3 322.0,30.4 322.5,29.7 323.0,29.1 323.5,28.6 324.0,28.4 324.5,28.3 325.0,28.4 325.5,28.7 326.0,29.2 326.5,29.8 327.0,30.6 327.5,31.6 328.0,32.7 328.5,33.9 329.0,35.2 329.5,36.6 330.0,38.1 330.5,39.6 331.0,38.1 331.5,35.1 332.0,118.7 332.5,109.3 333.0,109.2 333.5,109.8 334.0,109.6 334.5,109.6 335.0,109.6 335.5,109.2 336.0,109.9 336.5,109.3 337.0,109.9 337.5,109.4 338.0,109.3 338.5,109.8 339.0,109.5 339.5,109.8 340.0,109.5 340.5,109.7 341.0,109.1 341.5,109.5 342.0,109.3 342.5,109.6 343.0,109.4 343.5,109.8 344.0,109.3 344.5,192.6 345.0,192.4 345.5,186.6 346.0,186.5 346.5,186.1 347.0,186.4 347.5,186.5 348.0,186.0 348.5,186.7 349.0,185.8 349.5,185.6 350.0,185.9 350.5,185.6 351.0,185.6 351.5,185.2 352.0,185.3 352.5,185.2 353.0,185.2 353.5,184.7 354.0,183.9 354.5,182.3 355.0,180.7 355.5,179.4 356.0,178.0 356.5,177.7 357.0,179.2 357.5,180.6 358.0,182.7 358.5,183.8 359.0,185.2 359.5,186.0 360.0,186.3 360.5,186.4 361.0,186.8 361.5,187.1 362.0,187.5 362.5,187.9 363.0,187.9 363.5,187.6 364.0,187.2 364.5,187.3 365.0,187.2 365.5,186.7 366.0,185.9 366.5,185.9 367.0,185.5 367.5,184.7 368.0,184.2 368.5,183.4 369.0,183.7 369.5,182.8 370.0,99.1 370.5,99.4 371.0,109.6 371.5,109.9 372.0,109.1 372.5,109.8 373.0,109.4 373.5,109.4 374.0,109.4 374.5,109.3 375.0,109.5 375.5,109.8 376.0,109.4 376.5,109.9 377.0,109.2 377.5,109.5 378.0,109.5 378.5,109.2 379.0,109.4 379.5,109.8 380.0,109.4 380.5,109.2 381.0,109.2 381.5,109.4 382.0,109.3 382.5,109.6 383.0,35.3 383.5,34.0 384.0,32.8 384.5,31.6 385.0,30.5 385.5,29.9 386.0,30.7 386.5,31.1 387.0,31.2 387.5,30.8 388.0,30.1 388.5,29.6 389.0,29.4 389.5,29.6 390.0,30.2 390.5,31.1 391.0,31.8 391.5,32.8 392.0,33.8 392.5,34.9 393.0,36.0 393.5,37.2 394.0,38.4 394.5,39.6 395.0,39.5 395.5,38.0 396.0,36.6 396.5,35.2 397.0,33.9 397.5,32.7 398.0,31.6 398.5,30.7 399.0,29.9 399.5,29.2 400.0,28.7 400.5,28.4 401.0,28.3 401.5,28.4 402.0,28.6 402.5,29.0 403.0,29.6 403.5,30.3 404.0,31.2 404.5,32.3 405.0,33.4 405.5,34.7 406.0,36.0 406.5,37.4 407.0,38.8 407.5,39.4 408.0,35.9 408.5,118.2 409.0,109.9 409.5,109.4 410.0,109.3 410.5,109.8 411.0,109.1 411.5,109.7 412.0,109.4 412.5,109.3 413.0,109.4 413.5,109.3 414.0,109.6 414.5,109.8 415.0,109.5 415.5,109.3 416.0,109.3 416.5,109.5 417.0,109.2 417.5,109.7 418.0,109.2 418.5,109.5 419.0,109.6 419.5,109.5 420.0,109.3 420.5,109.8 421.0,192.6 421.5,193.0 422.0,186.3 422.5,187.0 423.0,187.1 423.5,186.4 424.0,186.8 424.5,186.7 425.0,186.7 425.5,186.2 426.0,186.1 426.5,186.2 427.0,185.7 427.5,185.2 428.0,185.1 428.5,184.9 429.0,184.8 429.5,185.2 430.0,185.2 430.5,184.3 431.0,182.5 431.5,181.1 432.0,179.5 432.5,178.6 433.0,177.0 433.5,178.8 434.0,180.9 434.5,182.2 435.0,183.6 435.5,184.7 436.0,185.9 436.5,185.8 437.0,186.9 437.5,187.0 438.0,187.5 438.5,188.1 439.0,187.9 439.5,188.1 440.0,187.7 440.5,187.3 441.0,187.2 441.5,187.8 442.0,187.5 442.5,186.2 443.0,185.3 443.5,185.4 444.0,184.5 444.5,184.5 445.0,183.4 445.5,182.9 446.0,182.6 446.5,99.1 447.0,99.7 447.5,109.8 448.0,109.2 448.5,109.4 449.0,109.7 449.5,109.5 450.0,109.6 450.5,109.9 451.0,109.2 451.5,109.7 452.0,109.6 452.5,109.5 453.0,109.5 453.5,109.6 454.0,109.3 454.5,109.6 455.0,109.3 455.5,109.7 456.0,109.8 456.5,109.5 457.0,109.6 457.5,109.3" fill="none" stroke="#fff" stroke-width="1" shape-rendering="crispEdges"/><polyline points="0.0,36.1 0.5,34.8 1.0,33.6 1.5,32.4 2.0,31.3 2.5,30.7 3.0,31.5 3.5,31.9 4.0,32.0 4.5,31.6 5.0,30.9 5.5,30.4 6.0,30.2 6.5,30.4 7.0,31.0 7.5,31.9 8.0,32.7 8.5,33.7 9.0,34.8 9.5,35.9 10.0,37.1 10.5,38.4 11.0,39.7 11.5,41.0 12.0,39.7 12.5,38.3 13.0,36.9 13.5,35.6 14.0,34.4 14.5,33.3 15.0,32.2 15.5,31.3 16.0,30.6 16.5,30.0 17.0,29.5 17.5,29.2 18.0,29.1 18.5,29.2 19.0,29.4 19.5,29.9 20.0,30.5 20.5,31.3 21.0,32.2 21.5,33.3 22.0,34.5 22.5,35.8 23.0,37.2 23.5,38.7 24.0,40.2" fill="none" stroke="#fff" stroke-width="1" shape-rendering="crispEdges"/><polyline points="77.0,35.1 77.5,33.8 78.0,32.7 78.5,31.5 79.0,30.5 79.5,31.3 80.0,31.9 80.5,32.0 81.0,31.7 81.5,31.1 82.0,30.5 82.5,30.2 83.0,30.3 83.5,30.9 84.0,31.7 84.5,32.4 85.0,33.3 85.5,34.3 86.0,35.4 86.5,36.5 87.0,37.7 87.5,38.8 88.0,40.1 88.5,39.8 89.0,38.4 89.5,37.1 90.0,35.8 90.5,34.6 91.0,33.4 91.5,32.4 92.0,31.5 92.5,30.7 93.0,30.1 93.5,29.6 94.0,29.3 94.5,29.1 95.0,29.1 95.5,29.4 96.0,29.8 96.5,30.4 97.0,31.1 97.5,32.0 98.0,33.1 98.5,34.3 99.0,35.6 99.5,37.0 100.0,38.5 100.5,40.1" fill="none" stroke="#fff" stroke-width="1" shape-rendering="crispEdges"/><polyline points="153.5,35.3 154.0,34.1 154.5,32.9 155.0,31.8 155.5,30.7 156.0,31.2 156.5,31.8 157.0,32.0 157.5,31.8 158.0,31.2 158.5,30.6 159.0,30.2 159.5,30.2 160.0,30.7 160.5,31.5 161.0,32.3 161.5,33.3 162.0,34.3 162.5,35.5 163.0,36.7 163.5,37.9 164.0,39.2 164.5,40.5 165.0,40.3 165.5,38.9 166.0,37.5 166.5,36.2 167.0,34.9 167.5,33.7 168.0,32.7 168.5,31.7 169.0,30.9 169.5,30.2 170.0,29.7 170.5,29.3 171.0,29.1 171.5,29.1 172.0,29.3 172.5,29.7 173.0,30.2 173.5,30.9 174.0,31.8 174.5,32.8 175.0,34.0 175.5,35.2 176.0,36.6 176.5,38.0 177.0,39.5 177.5,41.1" fill="none" stroke="#fff" stroke-width="1" shape-rendering="crispEdges"/><polyline points="230.0,35.6 230.5,34.3 231.0,33.1 231.5,32.0 232.0,30.9 232.5,31.0 233.0,31.7 233.5,32.0 234.0,31.8 234.5,31.3 235.0,30.7 235.5,30.3 236.0,30.2 236.5,30.6 237.0,31.3 237.5,32.1 238.0,33.0 238.5,34.0 239.0,35.1 239.5,36.2 240.0,37.4 240.5,38.6 241.0,39.8 241.5,40.4 242.0,39.0 242.5,37.6 243.0,36.3 243.5,35.0 244.0,33.9 244.5,32.8 245.0,31.8 245.5,31.0 246.0,30.3 246.5,29.7 247.0,29.4 247.5,29.2 248.0,29.1 248.5,29.2 249.0,29.6 249.5,30.1 250.0,30.8 250.5,31.6 251.0,32.7 251.5,33.8 252.0,35.1 252.5,36.5 253.0,37.9 253.5,39.4 254.0,41.0" fill="none" stroke="#fff" stroke-width="1" shape-rendering="crispEdges"/><polyline points="306.5,35.8 307.0,34.6 307.5,33.4 308.0,32.2 308.5,31.1 309.0,30.9 309.5,31.6 310.0,32.0 310.5,31.9 311.0,31.4 311.5,30.8 312.0,30.3 312.5,30.2 313.0,30.5 313.5,31.2 314.0,32.0 314.5,32.7 315.0,33.6 315.5,34.6 316.0,35.6 316.5,36.7 317.0,37.8 317.5,39.0 318.0,40.1 318.5,39.6 319.0,38.2 319.5,36.8 320.0,35.5 320.5,34.2 321.0,33.1 321.5,32.1 322.0,31.2 322.5,30.5 323.0,29.9 323.5,29.4 324.0,29.2 324.5,29.1 325.0,29.2 325.5,29.5 326.0,30.0 326.5,30.6 327.0,31.4 327.5,32.4 328.0,33.5 328.5,34.7 329.0,36.0 329.5,37.4 330.0,38.9 330.5,40.4" fill="none" stroke="#fff" stroke-width="1" shape-rendering="crispEdges"/><polyline points="383.0,36.1 383.5,34.8 384.0,33.6 384.5,32.4 385.0,31.3 385.5,30.7 386.0,31.5 386.5,31.9 387.0,32.0 387.5,31.6 388.0,30.9 388.5,30.4 389.0,30.2 389.5,30.4 390.0,31.0 390.5,31.9 391.0,32.6 391.5,33.6 392.0,34.6 392.5,35.7 393.0,36.8 393.5,38.0 394.0,39.2 394.5,40.4 395.0,40.3 395.5,38.8 396.0,37.4 396.5,36.0 397.0,34.7 397.5,33.5 398.0,32.4 398.5,31.5 399.0,30.7 399.5,30.0 400.0,29.5 400.5,29.2 401.0,29.1 401.5,29.2 402.0,29.4 402.5,29.8 403.0,30.4 403.5,31.1 404.0,32.0 404.5,33.1 405.0,34.2 405.5,35.5 406.0,36.8 406.5,38.2 407.0,39.6" fill="none" stroke="#fff" stroke-width="1" shape-rendering="crispEdges"/></svg>
<div style="left:468px;top:433px;width:79px;height:72px;background:#b3b3b3;box-shadow:inset 1px 1px 0 #e2e2e2,inset -1px -1px 0 #666;"></div>
<svg style="left:471px;top:439.5px" width="14" height="14" viewBox="0 0 14 14"><circle cx="6.5" cy="7" r="5" fill="#fff" stroke="#000" stroke-width="1.2"/><path d="M6.5 3.8 L9.7 7 L6.5 10.2 L3.3 7 Z" fill="#000"/></svg>
<span class="t " style="left:486.20px;top:439.52px;font-size:12px;line-height:12px;color:#000;transform:scaleX(0.8040);">A1</span>
<div style="left:519px;top:437px;width:23px;height:18px;background:#000;box-shadow:1px 1px 0 #e0e0e0, 0 -1px 0 #666, -1px 0 0 #666;"></div>
<svg style="left:519px;top:437px" width="24" height="18" viewBox="0 0 24 18"><polyline points="3.0,14.0 10.5,3.5 19.0,14.0 22.0,10.0" fill="none" stroke="#ffffff" stroke-width="1" shape-rendering="crispEdges"/></svg>
<svg style="left:471px;top:460.1px" width="14" height="14" viewBox="0 0 14 14"><circle cx="6.5" cy="7" r="5" fill="#fff" stroke="#000" stroke-width="1.2"/><path d="M6.5 3.8 L9.7 7 L6.5 10.2 L3.3 7 Z" fill="#000"/></svg>
<span class="t " style="left:486.20px;top:462.12px;font-size:12px;line-height:12px;color:#000;transform:scaleX(0.8040);">A2</span>
<div style="left:519px;top:460px;width:23px;height:18px;background:#000;box-shadow:1px 1px 0 #e0e0e0, 0 -1px 0 #666, -1px 0 0 #666;"></div>
<svg style="left:519px;top:460px" width="24" height="18" viewBox="0 0 24 18"><polyline points="3.0,14.0 12.5,3.5 22.0,14.0" fill="none" stroke="#ff4040" stroke-width="1" shape-rendering="crispEdges"/></svg>
<svg style="left:471px;top:480.7px" width="14" height="14" viewBox="0 0 14 14"><circle cx="6.5" cy="7" r="5" fill="#fff" stroke="#000" stroke-width="1.2"/><path d="M6.5 3.8 L9.7 7 L6.5 10.2 L3.3 7 Z" fill="#000"/></svg>
<span class="t " style="left:486.20px;top:484.72px;font-size:12px;line-height:12px;color:#000;transform:scaleX(0.8040);">A3</span>
<div style="left:519px;top:483px;width:23px;height:18px;background:#000;box-shadow:1px 1px 0 #e0e0e0, 0 -1px 0 #666, -1px 0 0 #666;"></div>
<svg style="left:519px;top:483px" width="24" height="18" viewBox="0 0 24 18"><polyline points="3.0,14.0 10.5,3.5 19.0,14.0 22.0,10.0" fill="none" stroke="#00e000" stroke-width="1" shape-rendering="crispEdges"/></svg>
<svg style="left:556px;top:421px" width="16" height="262" viewBox="0 0 16 262"><rect x="3" y="12" width="10" height="222" fill="#808080"/><rect x="3" y="12" width="1" height="222" fill="#9a9a9a"/><path d="M8 3 L13.5 10 H2.5 Z" fill="#a2a2a2"/><path d="M8 244 L13.5 237 H2.5 Z" fill="#a2a2a2"/></svg>
<svg style="left:544px;top:536px" width="33" height="18" viewBox="0 0 33 18"><path d="M1 9 L32 1 V17 Z" fill="#7aa5d6"/></svg>
<span class="t " style="left:578.00px;top:147.88px;font-size:13px;line-height:13px;color:#000;font-weight:bold;transform:scaleX(0.9193);">V Trigger</span>
<span class="t " style="left:587.90px;top:173.08px;font-size:13px;line-height:13px;color:#000;font-weight:bold;transform:scaleX(0.9373);">Voltage</span>
<span class="t " style="left:588.00px;top:187.78px;font-size:13px;line-height:13px;color:#000;font-weight:bold;transform:scaleX(0.8760);">Range</span>
<span class="t " style="left:583.00px;top:208.58px;font-size:13px;line-height:13px;color:#101020;transform:scaleX(0.7839);">100</span>
<span class="t " style="left:588.60px;top:230.83px;font-size:13px;line-height:13px;color:#101020;transform:scaleX(0.7885);">75</span>
<span class="t " style="left:588.60px;top:253.08px;font-size:13px;line-height:13px;color:#101020;transform:scaleX(0.7885);">50</span>
<span class="t " style="left:588.60px;top:275.33px;font-size:13px;line-height:13px;color:#101020;transform:scaleX(0.7885);">25</span>
<span class="t " style="left:594.30px;top:297.58px;font-size:13px;line-height:13px;color:#101020;transform:scaleX(0.7885);">0</span>
<div style="left:611px;top:214px;width:23px;height:58px;background:#b8b8b8;"></div>
<div style="left:611px;top:283px;width:23px;height:23px;background:#949494;"></div>
<div style="left:611px;top:214px;width:1px;height:92px;background:#6e6e6e;"></div>
<div style="left:611px;top:214px;width:23px;height:1px;background:#8a8a8a;"></div>
<div style="left:633px;top:214px;width:1px;height:92px;background:#dcdcdc;"></div>
<div style="left:611px;top:305px;width:23px;height:1px;background:#dcdcdc;"></div>
<div style="left:608px;top:272px;width:29px;height:11px;background:#000;"></div>
<div style="left:609px;top:276px;width:27px;height:1px;background:#a8a8a8;"></div>
<svg style="left:610px;top:205.3px" width="25" height="7.2" viewBox="0 0 25 7.2"><path d="M12.3 0 L25 6.7 H0 Z" fill="#8a8a8a"/><rect x="0" y="5.7" width="25" height="1" fill="#4e4e4e"/></svg>
<svg style="left:610px;top:308.0px" width="25" height="8.5" viewBox="0 0 25 8.5"><path d="M0 0 H25 L12.3 7.5 Z" fill="#8c8c8c"/><path d="M12.3 7.5 L25 0" stroke="#3a3a3a" stroke-width="1" fill="none"/><path d="M0 0 L12.3 7.5" stroke="#c6c6c6" stroke-width="0.8" fill="none"/></svg>
<span class="t " style="left:580.00px;top:328.68px;font-size:13px;line-height:13px;color:#000;font-weight:bold;transform:scaleX(0.9047);">Subtract</span>
<span class="t " style="left:580.00px;top:343.68px;font-size:13px;line-height:13px;color:#000;font-weight:bold;transform:scaleX(0.8935);">Zero Seq</span>
<div style="left:579px;top:365px;width:62px;height:22px;border:1px solid #000;background:#bababa;box-shadow:inset 1px 1px 0 #ececec,inset -2px -2px 0 #6a6a6a,inset 2px 2px 0 #d2d2d2"></div>
<span class="t " style="left:600.30px;top:370.58px;font-size:13px;line-height:13px;color:#000;font-weight:bold;transform:scaleX(0.7964);">OFF</span>
<div style="left:574px;top:428px;width:51px;height:15px;background:#b9b9b9;"></div>
<span class="t " style="left:575.80px;top:428.88px;font-size:13px;line-height:13px;color:#85858c;font-weight:bold;transform:scaleX(0.9067);">I Trigger</span>
<span class="t " style="left:586.20px;top:454.58px;font-size:13px;line-height:13px;color:#000;font-weight:bold;transform:scaleX(0.9117);">Current</span>
<span class="t " style="left:586.20px;top:469.58px;font-size:13px;line-height:13px;color:#000;font-weight:bold;transform:scaleX(0.8659);">Range</span>
<span class="t " style="left:586.60px;top:490.48px;font-size:13px;line-height:13px;color:#101020;transform:scaleX(0.7885);">50</span>
<span class="t " style="left:586.60px;top:509.70px;font-size:13px;line-height:13px;color:#101020;transform:scaleX(0.7885);">40</span>
<span class="t " style="left:586.60px;top:528.92px;font-size:13px;line-height:13px;color:#101020;transform:scaleX(0.7885);">30</span>
<span class="t " style="left:586.60px;top:548.14px;font-size:13px;line-height:13px;color:#101020;transform:scaleX(0.7885);">20</span>
<span class="t " style="left:586.60px;top:567.36px;font-size:13px;line-height:13px;color:#101020;transform:scaleX(0.7885);">10</span>
<span class="t " style="left:592.30px;top:586.58px;font-size:13px;line-height:13px;color:#101020;transform:scaleX(0.7885);">0</span>
<div style="left:609px;top:496px;width:23px;height:88px;background:#b8b8b8;"></div>
<div style="left:609px;top:595px;width:23px;height:2px;background:#949494;"></div>
<div style="left:609px;top:496px;width:1px;height:101px;background:#6e6e6e;"></div>
<div style="left:609px;top:496px;width:23px;height:1px;background:#8a8a8a;"></div>
<div style="left:631px;top:496px;width:1px;height:101px;background:#dcdcdc;"></div>
<div style="left:609px;top:596px;width:23px;height:1px;background:#dcdcdc;"></div>
<div style="left:606px;top:584px;width:29px;height:11px;background:#000;"></div>
<div style="left:607px;top:588px;width:27px;height:1px;background:#a8a8a8;"></div>
<svg style="left:608px;top:487.4px" width="25" height="6.6" viewBox="0 0 25 6.6"><path d="M12.6 0 L25 6.1 H0 Z" fill="#8a8a8a"/><rect x="0" y="5.1" width="25" height="1" fill="#4e4e4e"/></svg>
<svg style="left:608px;top:597.0px" width="25" height="8.5" viewBox="0 0 25 8.5"><path d="M0 0 H25 L12.6 7.5 Z" fill="#8c8c8c"/><path d="M12.6 7.5 L25 0" stroke="#3a3a3a" stroke-width="1" fill="none"/><path d="M0 0 L12.6 7.5" stroke="#c6c6c6" stroke-width="0.8" fill="none"/></svg>
<div style="left:584px;top:622px;width:52px;height:34px;border:1px solid #000;background:#bababa;box-shadow:inset 1px 1px 0 #ececec,inset -2px -2px 0 #6a6a6a,inset 2px 2px 0 #d2d2d2"></div>
<span class="t " style="left:598.80px;top:626.68px;font-size:13px;line-height:13px;color:#000;font-weight:bold;transform:scaleX(0.8342);">Zero</span>
<span class="t " style="left:596.20px;top:639.78px;font-size:13px;line-height:13px;color:#000;font-weight:bold;transform:scaleX(0.8306);">Amps</span>
<span class="t " style="left:702.00px;top:124.66px;font-size:16px;line-height:16px;color:#000;font-weight:bold;transform:scaleX(0.9859);">Electrical Measurements</span>
<span class="t " style="left:683.20px;top:164.62px;font-size:12px;line-height:12px;color:#000;font-weight:bold;transform:scaleX(0.8835);">Ch1 Trigger Source</span>
<div style="left:683px;top:176px;width:98px;height:1px;background:#000;"></div>
<span class="t " style="left:683.30px;top:185.32px;font-size:12px;line-height:12px;color:#000;font-weight:bold;transform:scaleX(0.8998);">Amps</span>
<span class="t " style="left:761.40px;top:184.82px;font-size:12px;line-height:12px;color:#000;font-weight:bold;transform:scaleX(0.9070);">Volts</span>
<svg style="left:735px;top:178px" width="28" height="24" viewBox="0 0 28 24"><ellipse cx="3.7" cy="10.8" rx="2.6" ry="3.3" fill="#bcbcbc" stroke="#d6d6d6" stroke-width="1"/><path d="M6 8.3 L21.8 2.1 M6 13.4 L21.8 20.6" fill="none" stroke="#4a4a4a" stroke-width="0.9"/><rect x="22.2" y="3" width="2.8" height="16.8" fill="#5a5a5a"/><rect x="22.2" y="3" width="0.8" height="16.8" fill="#222"/><rect x="24.4" y="3" width="0.7" height="16.8" fill="#333"/></svg>
<span class="t " style="left:826.80px;top:160.92px;font-size:12px;line-height:12px;color:#000;font-weight:bold;transform:scaleX(0.9576);">Fundamental Frequency</span>
<div style="left:838px;top:178px;width:62px;height:25px;background:#d4d4d4;"></div>
<div style="left:838px;top:178px;width:62px;height:25px;border:1px solid #6c6c6c"></div>
<div style="left:836px;top:176px;width:61px;height:24px;border:2px solid #d2d2d2;border-right-color:#f2f2f2;border-bottom-color:#f2f2f2"></div>
<span class="t " style="left:841.80px;top:182.62px;font-size:17px;line-height:17px;color:#14142a;transform:scaleX(0.9098);">359.9</span>
<span class="t " style="left:911.00px;top:187.42px;font-size:12px;line-height:12px;color:#000;font-weight:bold;transform:scaleX(0.9682);">Hz</span>
<div style="left:690px;top:213px;width:299px;height:1px;background:#000;"></div>
<div style="left:795px;top:222px;width:1px;height:249px;background:#000;"></div>
<div style="left:926px;top:222px;width:1px;height:249px;background:#000;"></div>
<span class="t " style="left:676.30px;top:224.72px;font-size:12px;line-height:12px;color:#000;font-weight:bold;transform:scaleX(0.9669);">V1 RMS</span>
<div style="left:676px;top:241px;width:111px;height:25px;background:#d4d4d4;"></div>
<div style="left:676px;top:241px;width:111px;height:25px;border:1px solid #6c6c6c"></div>
<div style="left:674px;top:239px;width:110px;height:24px;border:2px solid #d2d2d2;border-right-color:#f2f2f2;border-bottom-color:#f2f2f2"></div>
<span class="t " style="left:680.20px;top:245.62px;font-size:17px;line-height:17px;color:#14142a;transform:scaleX(0.9004);">10.09</span>
<svg style="left:731px;top:243px" width="22" height="19" viewBox="0 0 22 19"><path d="M11.8 1 L0.8 16.5 H18.5" fill="none" stroke="#000" stroke-width="1.1"/></svg>
<span class="t " style="left:742.60px;top:246.86px;font-size:11px;line-height:11px;color:#000;font-weight:bold;transform:scaleX(0.9418);">5.4</span>
<span class="t " style="left:802.80px;top:223.12px;font-size:12px;line-height:12px;color:#000;font-weight:bold;transform:scaleX(0.9484);">A1 RMS</span>
<div style="left:804px;top:240px;width:111px;height:25px;background:#d4d4d4;"></div>
<div style="left:804px;top:240px;width:111px;height:25px;border:1px solid #6c6c6c"></div>
<div style="left:802px;top:238px;width:110px;height:24px;border:2px solid #d2d2d2;border-right-color:#f2f2f2;border-bottom-color:#f2f2f2"></div>
<span class="t " style="left:808.30px;top:244.62px;font-size:17px;line-height:17px;color:#14142a;transform:scaleX(0.8917);">1.10</span>
<svg style="left:857px;top:242px" width="22" height="19" viewBox="0 0 22 19"><path d="M11.8 1 L0.8 16.5 H18.5" fill="none" stroke="#000" stroke-width="1.1"/></svg>
<span class="t " style="left:869.40px;top:245.86px;font-size:11px;line-height:11px;color:#000;font-weight:bold;transform:scaleX(0.9156);">34.2</span>
<span class="t " style="left:938.30px;top:224.32px;font-size:12px;line-height:12px;color:#000;font-weight:bold;transform:scaleX(0.9739);">Ch1 Watts</span>
<div style="left:939px;top:240px;width:62px;height:25px;background:#d4d4d4;"></div>
<div style="left:939px;top:240px;width:62px;height:25px;border:1px solid #6c6c6c"></div>
<div style="left:937px;top:238px;width:61px;height:24px;border:2px solid #d2d2d2;border-right-color:#f2f2f2;border-bottom-color:#f2f2f2"></div>
<span class="t " style="left:943.60px;top:244.62px;font-size:17px;line-height:17px;color:#14142a;transform:scaleX(0.8887);">9.0</span>
<span class="t " style="left:676.30px;top:285.92px;font-size:12px;line-height:12px;color:#000;font-weight:bold;transform:scaleX(0.9669);">V2 RMS</span>
<div style="left:676px;top:302px;width:111px;height:25px;background:#d4d4d4;"></div>
<div style="left:676px;top:302px;width:111px;height:25px;border:1px solid #6c6c6c"></div>
<div style="left:674px;top:300px;width:110px;height:24px;border:2px solid #d2d2d2;border-right-color:#f2f2f2;border-bottom-color:#f2f2f2"></div>
<span class="t " style="left:680.20px;top:306.62px;font-size:17px;line-height:17px;color:#14142a;transform:scaleX(0.9279);">11.86</span>
<svg style="left:731px;top:304px" width="22" height="19" viewBox="0 0 22 19"><path d="M11.8 1 L0.8 16.5 H18.5" fill="none" stroke="#000" stroke-width="1.1"/></svg>
<span class="t " style="left:742.60px;top:307.86px;font-size:11px;line-height:11px;color:#000;font-weight:bold;transform:scaleX(0.9573);">-40.6</span>
<span class="t " style="left:802.80px;top:285.12px;font-size:12px;line-height:12px;color:#000;font-weight:bold;transform:scaleX(0.9484);">A2 RMS</span>
<div style="left:804px;top:302px;width:111px;height:25px;background:#d4d4d4;"></div>
<div style="left:804px;top:302px;width:111px;height:25px;border:1px solid #6c6c6c"></div>
<div style="left:802px;top:300px;width:110px;height:24px;border:2px solid #d2d2d2;border-right-color:#f2f2f2;border-bottom-color:#f2f2f2"></div>
<span class="t " style="left:808.30px;top:306.62px;font-size:17px;line-height:17px;color:#14142a;transform:scaleX(0.8917);">1.43</span>
<svg style="left:857px;top:304px" width="22" height="19" viewBox="0 0 22 19"><path d="M11.8 1 L0.8 16.5 H18.5" fill="none" stroke="#000" stroke-width="1.1"/></svg>
<span class="t " style="left:869.40px;top:307.86px;font-size:11px;line-height:11px;color:#000;font-weight:bold;transform:scaleX(0.9174);">-32.2</span>
<span class="t " style="left:938.30px;top:285.92px;font-size:12px;line-height:12px;color:#000;font-weight:bold;transform:scaleX(0.9739);">Ch2 Watts</span>
<div style="left:939px;top:302px;width:62px;height:25px;background:#d4d4d4;"></div>
<div style="left:939px;top:302px;width:62px;height:25px;border:1px solid #6c6c6c"></div>
<div style="left:937px;top:300px;width:61px;height:24px;border:2px solid #d2d2d2;border-right-color:#f2f2f2;border-bottom-color:#f2f2f2"></div>
<span class="t " style="left:943.60px;top:306.62px;font-size:17px;line-height:17px;color:#14142a;transform:scaleX(0.8766);">16.9</span>
<span class="t " style="left:676.30px;top:346.72px;font-size:12px;line-height:12px;color:#000;font-weight:bold;transform:scaleX(0.9669);">V3 RMS</span>
<div style="left:676px;top:363px;width:111px;height:25px;background:#d4d4d4;"></div>
<div style="left:676px;top:363px;width:111px;height:25px;border:1px solid #6c6c6c"></div>
<div style="left:674px;top:361px;width:110px;height:24px;border:2px solid #d2d2d2;border-right-color:#f2f2f2;border-bottom-color:#f2f2f2"></div>
<span class="t " style="left:680.20px;top:367.62px;font-size:17px;line-height:17px;color:#14142a;transform:scaleX(0.9279);">11.58</span>
<svg style="left:731px;top:365px" width="22" height="19" viewBox="0 0 22 19"><path d="M11.8 1 L0.8 16.5 H18.5" fill="none" stroke="#000" stroke-width="1.1"/></svg>
<span class="t " style="left:742.60px;top:368.86px;font-size:11px;line-height:11px;color:#000;font-weight:bold;transform:scaleX(0.9573);">-41.0</span>
<span class="t " style="left:802.80px;top:346.12px;font-size:12px;line-height:12px;color:#000;font-weight:bold;transform:scaleX(0.9484);">A3 RMS</span>
<div style="left:804px;top:363px;width:111px;height:25px;background:#d4d4d4;"></div>
<div style="left:804px;top:363px;width:111px;height:25px;border:1px solid #6c6c6c"></div>
<div style="left:802px;top:361px;width:110px;height:24px;border:2px solid #d2d2d2;border-right-color:#f2f2f2;border-bottom-color:#f2f2f2"></div>
<span class="t " style="left:808.30px;top:367.62px;font-size:17px;line-height:17px;color:#14142a;transform:scaleX(0.8917);">1.40</span>
<svg style="left:857px;top:365px" width="22" height="19" viewBox="0 0 22 19"><path d="M11.8 1 L0.8 16.5 H18.5" fill="none" stroke="#000" stroke-width="1.1"/></svg>
<span class="t " style="left:869.40px;top:368.86px;font-size:11px;line-height:11px;color:#000;font-weight:bold;transform:scaleX(0.9174);">-32.1</span>
<span class="t " style="left:938.30px;top:346.72px;font-size:12px;line-height:12px;color:#000;font-weight:bold;transform:scaleX(0.9739);">Ch3 Watts</span>
<div style="left:939px;top:363px;width:62px;height:25px;background:#d4d4d4;"></div>
<div style="left:939px;top:363px;width:62px;height:25px;border:1px solid #6c6c6c"></div>
<div style="left:937px;top:361px;width:61px;height:24px;border:2px solid #d2d2d2;border-right-color:#f2f2f2;border-bottom-color:#f2f2f2"></div>
<span class="t " style="left:943.60px;top:367.62px;font-size:17px;line-height:17px;color:#14142a;transform:scaleX(0.8766);">16.2</span>
<span class="t " style="left:687.10px;top:402.80px;font-size:15px;line-height:15px;color:#000;font-weight:bold;transform:scaleX(0.9481);">Avg Volts</span>
<div style="left:688px;top:426px;width:76px;height:25px;background:#d4d4d4;"></div>
<div style="left:688px;top:426px;width:76px;height:25px;border:1px solid #6c6c6c"></div>
<div style="left:686px;top:424px;width:75px;height:24px;border:2px solid #d2d2d2;border-right-color:#f2f2f2;border-bottom-color:#f2f2f2"></div>
<span class="t " style="left:692.50px;top:431.12px;font-size:17px;line-height:17px;color:#000;font-weight:bold;transform:scaleX(1.0457);">11.18</span>
<span class="t " style="left:815.50px;top:401.40px;font-size:15px;line-height:15px;color:#000;font-weight:bold;transform:scaleX(0.9895);">Avg Amps</span>
<div style="left:819px;top:426px;width:76px;height:25px;background:#d4d4d4;"></div>
<div style="left:819px;top:426px;width:76px;height:25px;border:1px solid #6c6c6c"></div>
<div style="left:817px;top:424px;width:75px;height:24px;border:2px solid #d2d2d2;border-right-color:#f2f2f2;border-bottom-color:#f2f2f2"></div>
<span class="t " style="left:823.50px;top:431.12px;font-size:17px;line-height:17px;color:#000;font-weight:bold;transform:scaleX(0.9612);">1.31</span>
<span class="t " style="left:930.50px;top:402.80px;font-size:15px;line-height:15px;color:#000;font-weight:bold;">Tot Power</span>
<div style="left:939px;top:426px;width:62px;height:25px;background:#d4d4d4;"></div>
<div style="left:939px;top:426px;width:62px;height:25px;border:1px solid #6c6c6c"></div>
<div style="left:937px;top:424px;width:61px;height:24px;border:2px solid #d2d2d2;border-right-color:#f2f2f2;border-bottom-color:#f2f2f2"></div>
<span class="t " style="left:942.80px;top:431.12px;font-size:17px;line-height:17px;color:#000;font-weight:bold;transform:scaleX(0.9854);">42.1</span>
<span class="t " style="left:682.20px;top:494.92px;font-size:12px;line-height:12px;color:#000;font-weight:bold;transform:scaleX(0.9496);">Sampling Period (mS)</span>
<div style="left:690px;top:514px;width:2px;height:18px;background:#d2d2d2;"></div>
<div style="left:692px;top:514px;width:294px;height:17px;background:#333;"></div>
<div style="left:692px;top:531px;width:294px;height:1px;background:#9a9a9a;"></div>
<div style="left:986px;top:514px;width:3px;height:18px;background:#c4c4c4;"></div>
<svg style="left:682.6px;top:513px" width="8" height="21" viewBox="0 0 8 21"><path d="M1 11 L7 1 V20 Z" fill="#808080"/></svg>
<svg style="left:988px;top:513px" width="8" height="21" viewBox="0 0 8 21"><path d="M7 11 L1 1 V20 Z" fill="#808080"/></svg>
<div style="left:891px;top:511px;width:10px;height:24px;background:#3399ff;"></div>
<div style="left:891px;top:511px;width:1px;height:24px;background:#7fc0ff;"></div>
<div style="left:895px;top:511px;width:1px;height:24px;background:#b8dcff;"></div>
<div style="left:896px;top:511px;width:1px;height:24px;background:#2a6db8;"></div>
<div style="left:900px;top:511px;width:1px;height:24px;background:#2a80d8;"></div>
<div style="left:693px;top:536px;width:1px;height:5px;background:#000;"></div>
<div style="left:713px;top:536px;width:1px;height:3px;background:#000;"></div>
<div style="left:725px;top:536px;width:1px;height:3px;background:#000;"></div>
<div style="left:734px;top:536px;width:1px;height:3px;background:#000;"></div>
<div style="left:740px;top:536px;width:1px;height:3px;background:#000;"></div>
<div style="left:745px;top:536px;width:1px;height:3px;background:#000;"></div>
<div style="left:750px;top:536px;width:1px;height:3px;background:#000;"></div>
<div style="left:754px;top:536px;width:1px;height:3px;background:#000;"></div>
<div style="left:757px;top:536px;width:1px;height:3px;background:#000;"></div>
<div style="left:760px;top:536px;width:1px;height:5px;background:#000;"></div>
<div style="left:781px;top:536px;width:1px;height:3px;background:#000;"></div>
<div style="left:792px;top:536px;width:1px;height:3px;background:#000;"></div>
<div style="left:801px;top:536px;width:1px;height:3px;background:#000;"></div>
<div style="left:807px;top:536px;width:1px;height:3px;background:#000;"></div>
<div style="left:813px;top:536px;width:1px;height:3px;background:#000;"></div>
<div style="left:817px;top:536px;width:1px;height:3px;background:#000;"></div>
<div style="left:821px;top:536px;width:1px;height:3px;background:#000;"></div>
<div style="left:825px;top:536px;width:1px;height:3px;background:#000;"></div>
<div style="left:828px;top:536px;width:1px;height:5px;background:#000;"></div>
<div style="left:848px;top:536px;width:1px;height:3px;background:#000;"></div>
<div style="left:860px;top:536px;width:1px;height:3px;background:#000;"></div>
<div style="left:868px;top:536px;width:1px;height:3px;background:#000;"></div>
<div style="left:875px;top:536px;width:1px;height:3px;background:#000;"></div>
<div style="left:880px;top:536px;width:1px;height:3px;background:#000;"></div>
<div style="left:884px;top:536px;width:1px;height:3px;background:#000;"></div>
<div style="left:888px;top:536px;width:1px;height:3px;background:#000;"></div>
<div style="left:892px;top:536px;width:1px;height:3px;background:#000;"></div>
<div style="left:895px;top:536px;width:1px;height:5px;background:#000;"></div>
<div style="left:915px;top:536px;width:1px;height:3px;background:#000;"></div>
<div style="left:927px;top:536px;width:1px;height:3px;background:#000;"></div>
<div style="left:935px;top:536px;width:1px;height:3px;background:#000;"></div>
<div style="left:942px;top:536px;width:1px;height:3px;background:#000;"></div>
<div style="left:947px;top:536px;width:1px;height:3px;background:#000;"></div>
<div style="left:952px;top:536px;width:1px;height:3px;background:#000;"></div>
<div style="left:956px;top:536px;width:1px;height:3px;background:#000;"></div>
<div style="left:959px;top:536px;width:1px;height:3px;background:#000;"></div>
<div style="left:962px;top:536px;width:1px;height:5px;background:#000;"></div>
<div style="left:982px;top:536px;width:1px;height:5px;background:#000;"></div>
<span class="t " style="left:684.30px;top:542.52px;font-size:12px;line-height:12px;color:#000;font-weight:bold;transform:scaleX(0.9412);">0.1</span>
<span class="t " style="left:758.30px;top:542.52px;font-size:12px;line-height:12px;color:#000;font-weight:bold;transform:scaleX(0.8242);">1</span>
<span class="t " style="left:822.30px;top:542.52px;font-size:12px;line-height:12px;color:#000;font-weight:bold;transform:scaleX(0.9141);">10</span>
<span class="t " style="left:886.30px;top:542.52px;font-size:12px;line-height:12px;color:#000;font-weight:bold;transform:scaleX(0.9641);">100</span>
<span class="t " style="left:970.60px;top:542.52px;font-size:12px;line-height:12px;color:#000;font-weight:bold;">2000</span>
<span class="t " style="left:689.50px;top:577.52px;font-size:12px;line-height:12px;color:#000;font-weight:bold;transform:scaleX(0.9681);">Filter</span>
<div style="left:679px;top:594px;width:55px;height:24px;border:1px solid #000;background:#bababa;box-shadow:inset 1px 1px 0 #ececec,inset -2px -2px 0 #6a6a6a,inset 2px 2px 0 #d2d2d2"></div>
<span class="t " style="left:696.10px;top:600.78px;font-size:13px;line-height:13px;color:#000;font-weight:bold;transform:scaleX(0.8195);">OFF</span>
<div style="left:762px;top:570px;width:126px;height:17px;background:#c9c9c9;"></div>
<span class="t " style="left:763.10px;top:572.72px;font-size:12px;line-height:12px;color:#84848c;font-weight:bold;transform:scaleX(0.9807);">Cutoff Frequency (Hz)</span>
<div style="left:753px;top:595px;width:8px;height:21px;background:#cacaca;"></div>
<svg style="left:753px;top:595px" width="8" height="21" viewBox="0 0 8 21"><path d="M1.5 10.5 L7 1.5 V19.5 Z" fill="none" stroke="#a6a6a6" stroke-width="1"/></svg>
<div style="left:762px;top:596px;width:227px;height:19px;background:#929292;"></div>
<div style="left:762px;top:614px;width:227px;height:1px;background:#b0b0b0;"></div>
<div style="left:762px;top:596px;width:1px;height:19px;background:#a2a2a2;"></div>
<div style="left:990px;top:595px;width:8px;height:21px;background:#cacaca;"></div>
<svg style="left:990px;top:595px" width="8" height="21" viewBox="0 0 8 21"><path d="M6.5 10.5 L1 1.5 V19.5 Z" fill="none" stroke="#a6a6a6" stroke-width="1"/></svg>
<div style="left:751px;top:622px;width:259px;height:21px;background:#cfcfcf;"></div>
<div style="left:867px;top:616px;width:13px;height:6px;background:#c2c2c2;"></div>
<div style="left:763px;top:622px;width:1px;height:5px;background:#6a6a6a;"></div>
<div style="left:786px;top:622px;width:1px;height:3px;background:#6a6a6a;"></div>
<div style="left:799px;top:622px;width:1px;height:3px;background:#6a6a6a;"></div>
<div style="left:808px;top:622px;width:1px;height:3px;background:#6a6a6a;"></div>
<div style="left:815px;top:622px;width:1px;height:3px;background:#6a6a6a;"></div>
<div style="left:821px;top:622px;width:1px;height:3px;background:#6a6a6a;"></div>
<div style="left:826px;top:622px;width:1px;height:3px;background:#6a6a6a;"></div>
<div style="left:831px;top:622px;width:1px;height:3px;background:#6a6a6a;"></div>
<div style="left:835px;top:622px;width:1px;height:3px;background:#6a6a6a;"></div>
<div style="left:838px;top:622px;width:1px;height:5px;background:#6a6a6a;"></div>
<div style="left:861px;top:622px;width:1px;height:3px;background:#6a6a6a;"></div>
<div style="left:883px;top:622px;width:1px;height:3px;background:#6a6a6a;"></div>
<div style="left:890px;top:622px;width:1px;height:3px;background:#6a6a6a;"></div>
<div style="left:896px;top:622px;width:1px;height:3px;background:#6a6a6a;"></div>
<div style="left:901px;top:622px;width:1px;height:3px;background:#6a6a6a;"></div>
<div style="left:906px;top:622px;width:1px;height:3px;background:#6a6a6a;"></div>
<div style="left:910px;top:622px;width:1px;height:3px;background:#6a6a6a;"></div>
<div style="left:913px;top:622px;width:1px;height:5px;background:#6a6a6a;"></div>
<div style="left:936px;top:622px;width:1px;height:3px;background:#6a6a6a;"></div>
<div style="left:949px;top:622px;width:1px;height:3px;background:#6a6a6a;"></div>
<div style="left:958px;top:622px;width:1px;height:3px;background:#6a6a6a;"></div>
<div style="left:965px;top:622px;width:1px;height:3px;background:#6a6a6a;"></div>
<div style="left:971px;top:622px;width:1px;height:3px;background:#6a6a6a;"></div>
<div style="left:976px;top:622px;width:1px;height:3px;background:#6a6a6a;"></div>
<div style="left:981px;top:622px;width:1px;height:3px;background:#6a6a6a;"></div>
<div style="left:985px;top:622px;width:1px;height:3px;background:#6a6a6a;"></div>
<div style="left:988px;top:622px;width:1px;height:5px;background:#6a6a6a;"></div>
<div style="left:988px;top:622px;width:1px;height:5px;background:#6a6a6a;"></div>
<span class="t " style="left:753.20px;top:628.92px;font-size:12px;line-height:12px;color:#84848c;font-weight:bold;transform:scaleX(0.9741);">100</span>
<span class="t " style="left:824.60px;top:628.92px;font-size:12px;line-height:12px;color:#84848c;font-weight:bold;transform:scaleX(1.0153);">1000</span>
<span class="t " style="left:895.40px;top:628.92px;font-size:12px;line-height:12px;color:#84848c;font-weight:bold;">10000</span>
<span class="t " style="left:967.40px;top:628.92px;font-size:12px;line-height:12px;color:#84848c;font-weight:bold;">100000</span>
<svg style="left:866px;top:588px" width="15" height="36" viewBox="0 0 15 36"><rect x="1" y="1.4" width="13" height="6" fill="#c6c6c6"/><path d="M1.3 1.4 H13.7 L8.2 31 H6.8 Z" fill="#86c0ff"/><path d="M7.5 31 V35" stroke="#5a7fb0" stroke-width="1"/></svg>
<div style="left:127px;top:705px;width:77px;height:39px;border:1px solid #000;background:#bababa;box-shadow:inset 1px 1px 0 #ececec,inset -2px -2px 0 #6a6a6a,inset 2px 2px 0 #d2d2d2"></div>
<span class="t " style="left:148.30px;top:720.08px;font-size:13px;line-height:13px;color:#ff0000;font-weight:bold;transform:scaleX(0.9400);">Pause</span>
<div style="left:244px;top:705px;width:79px;height:39px;border:1px solid #828282;background:#d1d1d1;box-shadow:inset 1px 1px 0 #ececec,inset -2px -2px 0 #a4a4a4"></div>
<span class="t " style="left:271.30px;top:713.62px;font-size:12px;line-height:12px;color:#84848c;font-weight:bold;transform:scaleX(0.8457);">Save</span>
<span class="t " style="left:271.30px;top:726.62px;font-size:12px;line-height:12px;color:#84848c;font-weight:bold;transform:scaleX(0.9113);">Data</span>
<div style="left:362px;top:707px;width:6px;height:22px;background:#c8c8c8;"></div>
<svg style="left:362px;top:707px" width="7" height="22" viewBox="0 0 7 22"><path d="M1.2 11.0 L6 1.5 V20.5 Z" fill="none" stroke="#a4a4a4" stroke-width="1"/></svg>
<div style="left:369px;top:708px;width:184px;height:20px;background:#919191;"></div>
<div style="left:369px;top:727px;width:184px;height:1px;background:#b4b4b4;"></div>
<div style="left:552px;top:708px;width:1px;height:20px;background:#b4b4b4;"></div>
<div style="left:555px;top:707px;width:7px;height:22px;background:#c8c8c8;"></div>
<svg style="left:555px;top:707px" width="7" height="22" viewBox="0 0 7 22"><path d="M5.8 11.0 L1 1.5 V20.5 Z" fill="none" stroke="#a4a4a4" stroke-width="1"/></svg>
<div style="left:369px;top:733px;width:190px;height:20px;background:#cfcfcf;"></div>
<div style="left:369px;top:705px;width:8px;height:27px;background:#8cc4ff;"></div>
<div style="left:369px;top:705px;width:1px;height:27px;background:#b8dcff;"></div>
<div style="left:372px;top:705px;width:1px;height:27px;background:#e0f0ff;"></div>
<div style="left:373px;top:705px;width:1px;height:27px;background:#6a9ad0;"></div>
<div style="left:376px;top:705px;width:1px;height:27px;background:#7ab0e8;"></div>
<div style="left:373px;top:733px;width:1px;height:5px;background:#6a6a6a;"></div>
<div style="left:377px;top:733px;width:1px;height:3px;background:#6a6a6a;"></div>
<div style="left:386px;top:733px;width:1px;height:3px;background:#6a6a6a;"></div>
<div style="left:395px;top:733px;width:1px;height:3px;background:#6a6a6a;"></div>
<div style="left:405px;top:733px;width:1px;height:3px;background:#6a6a6a;"></div>
<div style="left:414px;top:733px;width:1px;height:5px;background:#6a6a6a;"></div>
<div style="left:423px;top:733px;width:1px;height:3px;background:#6a6a6a;"></div>
<div style="left:432px;top:733px;width:1px;height:3px;background:#6a6a6a;"></div>
<div style="left:441px;top:733px;width:1px;height:3px;background:#6a6a6a;"></div>
<div style="left:450px;top:733px;width:1px;height:3px;background:#6a6a6a;"></div>
<div style="left:459px;top:733px;width:1px;height:5px;background:#6a6a6a;"></div>
<div style="left:468px;top:733px;width:1px;height:3px;background:#6a6a6a;"></div>
<div style="left:478px;top:733px;width:1px;height:3px;background:#6a6a6a;"></div>
<div style="left:487px;top:733px;width:1px;height:3px;background:#6a6a6a;"></div>
<div style="left:496px;top:733px;width:1px;height:3px;background:#6a6a6a;"></div>
<div style="left:505px;top:733px;width:1px;height:5px;background:#6a6a6a;"></div>
<div style="left:514px;top:733px;width:1px;height:3px;background:#6a6a6a;"></div>
<div style="left:523px;top:733px;width:1px;height:3px;background:#6a6a6a;"></div>
<div style="left:532px;top:733px;width:1px;height:3px;background:#6a6a6a;"></div>
<div style="left:541px;top:733px;width:1px;height:3px;background:#6a6a6a;"></div>
<div style="left:551px;top:733px;width:1px;height:5px;background:#6a6a6a;"></div>
<span class="t " style="left:371.30px;top:739.52px;font-size:12px;line-height:12px;color:#72727c;transform:scaleX(0.4945);">1</span>
<span class="t " style="left:409.00px;top:739.52px;font-size:12px;line-height:12px;color:#72727c;transform:scaleX(0.8542);">10</span>
<span class="t " style="left:454.30px;top:739.52px;font-size:12px;line-height:12px;color:#72727c;transform:scaleX(0.8467);">20</span>
<span class="t " style="left:499.60px;top:739.52px;font-size:12px;line-height:12px;color:#72727c;transform:scaleX(0.8392);">30</span>
<span class="t " style="left:544.80px;top:739.52px;font-size:12px;line-height:12px;color:#72727c;transform:scaleX(0.9141);">40</span>
<div style="left:571px;top:708px;width:34px;height:15px;background:#c9c9c9;"></div>
<span class="t " style="left:572.80px;top:710.02px;font-size:12px;line-height:12px;color:#84848c;font-weight:bold;transform:scaleX(0.9155);">Zoom</span>
<div style="left:646px;top:707px;width:6px;height:20px;background:#c8c8c8;"></div>
<svg style="left:646px;top:707px" width="7" height="20" viewBox="0 0 7 20"><path d="M1.2 10.0 L6 1.5 V18.5 Z" fill="none" stroke="#a4a4a4" stroke-width="1"/></svg>
<div style="left:653px;top:708px;width:193px;height:18px;background:#919191;"></div>
<div style="left:653px;top:725px;width:193px;height:1px;background:#b4b4b4;"></div>
<div style="left:845px;top:708px;width:1px;height:18px;background:#b4b4b4;"></div>
<div style="left:848px;top:707px;width:7px;height:20px;background:#c8c8c8;"></div>
<svg style="left:848px;top:707px" width="7" height="20" viewBox="0 0 7 20"><path d="M5.8 10.0 L1 1.5 V18.5 Z" fill="none" stroke="#a4a4a4" stroke-width="1"/></svg>
<div style="left:652px;top:729px;width:197px;height:22px;background:#cfcfcf;"></div>
<div style="left:652px;top:705px;width:8px;height:24px;background:#8cc4ff;"></div>
<div style="left:652px;top:705px;width:1px;height:24px;background:#b8dcff;"></div>
<div style="left:655px;top:705px;width:1px;height:24px;background:#e0f0ff;"></div>
<div style="left:656px;top:705px;width:1px;height:24px;background:#6a9ad0;"></div>
<div style="left:659px;top:705px;width:1px;height:24px;background:#7ab0e8;"></div>
<div style="left:656px;top:729px;width:1px;height:5px;background:#6a6a6a;"></div>
<div style="left:665px;top:729px;width:1px;height:3px;background:#6a6a6a;"></div>
<div style="left:674px;top:729px;width:1px;height:3px;background:#6a6a6a;"></div>
<div style="left:684px;top:729px;width:1px;height:3px;background:#6a6a6a;"></div>
<div style="left:693px;top:729px;width:1px;height:5px;background:#6a6a6a;"></div>
<div style="left:703px;top:729px;width:1px;height:3px;background:#6a6a6a;"></div>
<div style="left:712px;top:729px;width:1px;height:3px;background:#6a6a6a;"></div>
<div style="left:721px;top:729px;width:1px;height:3px;background:#6a6a6a;"></div>
<div style="left:731px;top:729px;width:1px;height:5px;background:#6a6a6a;"></div>
<div style="left:740px;top:729px;width:1px;height:3px;background:#6a6a6a;"></div>
<div style="left:750px;top:729px;width:1px;height:3px;background:#6a6a6a;"></div>
<div style="left:759px;top:729px;width:1px;height:3px;background:#6a6a6a;"></div>
<div style="left:768px;top:729px;width:1px;height:5px;background:#6a6a6a;"></div>
<div style="left:778px;top:729px;width:1px;height:3px;background:#6a6a6a;"></div>
<div style="left:787px;top:729px;width:1px;height:3px;background:#6a6a6a;"></div>
<div style="left:797px;top:729px;width:1px;height:3px;background:#6a6a6a;"></div>
<div style="left:806px;top:729px;width:1px;height:5px;background:#6a6a6a;"></div>
<div style="left:815px;top:729px;width:1px;height:3px;background:#6a6a6a;"></div>
<div style="left:825px;top:729px;width:1px;height:3px;background:#6a6a6a;"></div>
<div style="left:834px;top:729px;width:1px;height:3px;background:#6a6a6a;"></div>
<div style="left:844px;top:729px;width:1px;height:5px;background:#6a6a6a;"></div>
<span class="t " style="left:653.40px;top:737.12px;font-size:12px;line-height:12px;color:#72727c;transform:scaleX(0.8092);">0</span>
<span class="t " style="left:686.40px;top:737.12px;font-size:12px;line-height:12px;color:#72727c;transform:scaleX(0.8633);">0.2</span>
<span class="t " style="left:723.80px;top:737.12px;font-size:12px;line-height:12px;color:#72727c;transform:scaleX(0.8753);">0.4</span>
<span class="t " style="left:761.50px;top:737.12px;font-size:12px;line-height:12px;color:#72727c;transform:scaleX(0.8573);">0.6</span>
<span class="t " style="left:798.30px;top:737.12px;font-size:12px;line-height:12px;color:#72727c;transform:scaleX(0.8933);">0.8</span>
<span class="t " style="left:842.10px;top:737.12px;font-size:12px;line-height:12px;color:#72727c;transform:scaleX(0.4945);">1</span>
<div style="left:860px;top:708px;width:46px;height:14px;background:#c9c9c9;"></div>
<span class="t " style="left:861.60px;top:709.82px;font-size:12px;line-height:12px;color:#84848c;font-weight:bold;transform:scaleX(0.8874);">Position</span>
</div></div>
</div></body></html>
